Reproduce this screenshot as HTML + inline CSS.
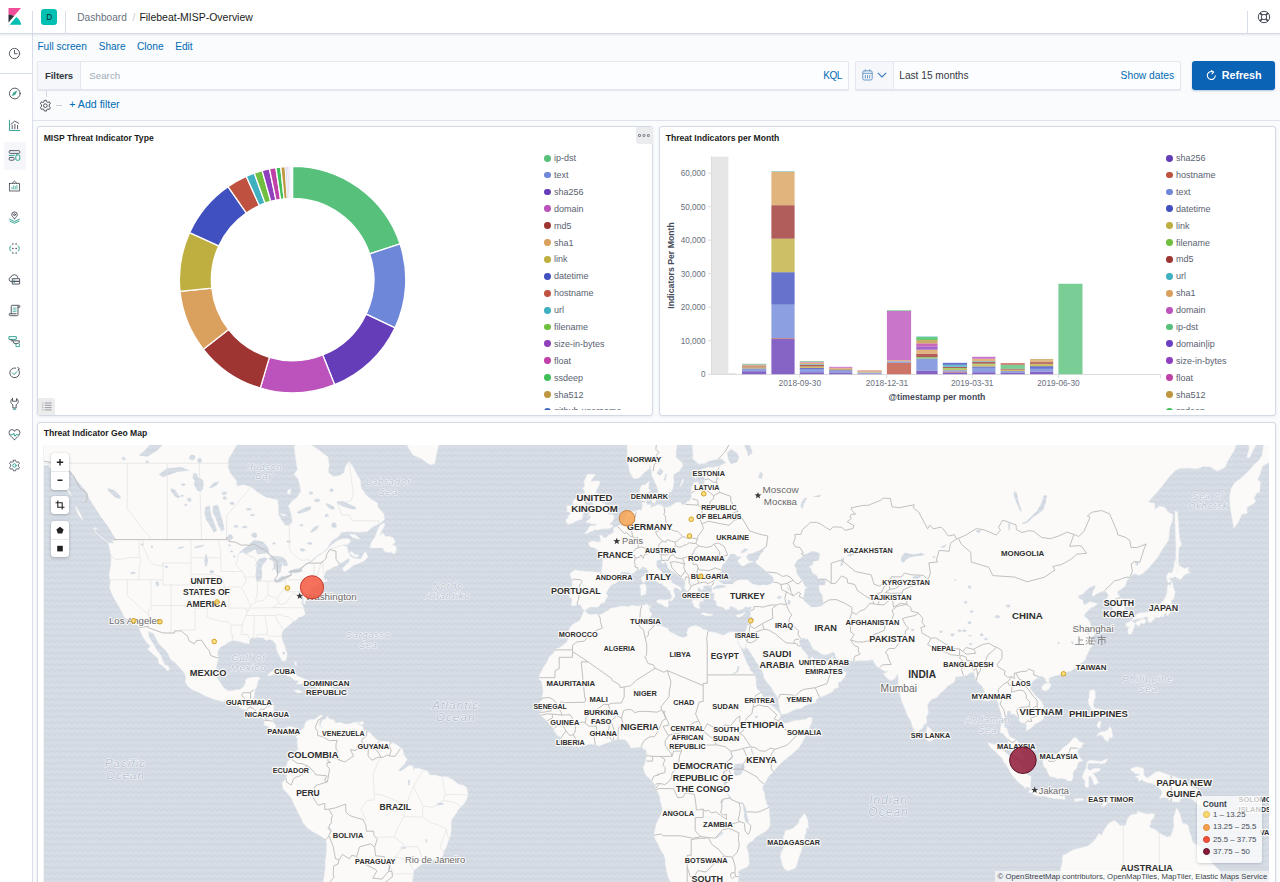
<!DOCTYPE html><html><head><meta charset="utf-8"><title>Filebeat-MISP-Overview</title><style>
*{box-sizing:border-box;margin:0;padding:0}
html,body{width:1280px;height:882px;overflow:hidden;background:#fafbfd;font-family:"Liberation Sans",sans-serif;color:#343741}
.abs{position:absolute}
#hdr{position:absolute;left:0;top:0;width:1280px;height:34px;background:#fff;border-bottom:1px solid #d3dae6;box-shadow:0 1px 2px rgba(152,162,179,.25)}
#nav{position:absolute;left:0;top:0;width:33px;height:882px;background:#fff;border-right:1px solid #d9dfea}
.vsep{position:absolute;width:1px;background:#d9dfea}
.t{position:absolute;white-space:pre;line-height:1}
.lnk{color:#006bb4}
.panel{position:absolute;background:#fff;border:1px solid #d3dae6;border-radius:3px;box-shadow:0 1px 3px rgba(152,162,179,.18)}
.ptitle{position:absolute;left:5.700px;top:6.000px;font-size:8.6px;font-weight:700;color:#1a1c21;white-space:pre;line-height:10px}
.fld{position:absolute;background:#fcfdfe;border:1px solid #e3e8f0;border-radius:2px;box-shadow:0 1px 1px rgba(152,162,179,.25)}
.lg{position:absolute;font-size:9px;color:#5a6270;white-space:pre;line-height:10px}
.lg i{position:absolute;left:-9.800px;top:1.600px;width:6.800px;height:6.800px;border-radius:50%}
</style></head><body><div id="nav"></div><div id="hdr"></div><div class="vsep" style="left:32px;top:11px;height:23px"></div><div class="vsep" style="left:65px;top:11px;height:23px"></div><div class="vsep" style="left:1247px;top:11px;height:23px"></div><svg class="abs" style="left:0;top:0" width="32" height="33" viewBox="0 0 32 33"><path d="M8.500 8.100H21L14.100 16.100C12.500 15.100 10.600 14.500 8.500 14.400Z" fill="#f04e98"/><path d="M8.500 14.400C10.600 14.500 12.500 15.100 14.100 16.100L8.500 22.500Z" fill="#2d2f3a"/><path d="M16.300 17.100C18.900 18.900 20.700 21.600 21.200 24.800H9.600Z" fill="#00bfb3"/></svg><div class="abs" style="left:41px;top:8.500px;width:16.300px;height:16.500px;border-radius:3px;background:#00bfb3"></div><div class="t" style="left:46.300px;top:13.700px;font-size:8.200px;color:#0c2b2a">D</div><div class="t" style="left:77.300px;top:12.700px;font-size:10.150px;color:#69707d">Dashboard</div><div class="t" style="left:132.600px;top:12.700px;font-size:10.200px;color:#c5cbd6">/</div><div class="t" style="left:139.400px;top:12.700px;font-size:10.480px;color:#1a1c21">Filebeat-MISP-Overview</div><svg class="abs" style="left:1257px;top:10px" width="14" height="14" viewBox="0 0 14 14" fill="none" stroke="#404552" stroke-width=".95"><circle cx="7" cy="7" r="5.700"/><circle cx="7" cy="7" r="2.700"/><path d="M2.900 2.900L5.100 5.100M11.100 2.900L8.900 5.100M2.900 11.100L5.100 8.900M11.100 11.100L8.900 8.900" stroke-width="1.500"/></svg><div class="abs" style="left:0;top:73px;width:32px;height:1px;background:#d9dfea"></div><div class="abs" style="left:4px;top:142px;width:22px;height:27.500px;border-radius:3px;background:#f4f6fa"></div><svg class="abs" style="left:8px;top:47.0px" width="13" height="13" viewBox="0 0 16 16" fill="none" stroke="#4a4f5a" stroke-width="1.15" stroke-linecap="round" stroke-linejoin="round"><circle cx="8" cy="8" r="6.3"/><path d="M8 4.2V8.3H11.2"/></svg><svg class="abs" style="left:8px;top:87.3px" width="13" height="13" viewBox="0 0 16 16" fill="none" stroke="#4a4f5a" stroke-width="1.15" stroke-linecap="round" stroke-linejoin="round"><circle cx="8.400" cy="8" r="6.600"/><path d="M10.8 5.2L9 9 5.2 10.8 7 7Z" fill="#2a9d8f" stroke="#2a9d8f" stroke-width=".6"/></svg><svg class="abs" style="left:8px;top:118.5px" width="13" height="13" viewBox="0 0 16 16" fill="none" stroke="#4a4f5a" stroke-width="1.15" stroke-linecap="round" stroke-linejoin="round"><path d="M1.8 1.5V14.2H14.5" stroke="#2a9d8f"/><path d="M5.2 12V8M8.5 12V6.5M11.8 12V8"/><path d="M3.6 6.6L8.2 2.6 13 5.2"/></svg><svg class="abs" style="left:8px;top:149.0px" width="13" height="13" viewBox="0 0 16 16" fill="none" stroke="#4a4f5a" stroke-width="1.15" stroke-linecap="round" stroke-linejoin="round"><rect x="1.5" y="2" width="13" height="3.4" rx="1.2"/><rect x="1.5" y="10.4" width="6" height="3.4" rx="1.2"/><path d="M1.5 7.9H7.5" stroke="#2a9d8f"/><rect x="9.6" y="7.4" width="4.9" height="6.4" rx="1.2" stroke="#2a9d8f"/></svg><svg class="abs" style="left:8px;top:179.5px" width="13" height="13" viewBox="0 0 16 16" fill="none" stroke="#4a4f5a" stroke-width="1.15" stroke-linecap="round" stroke-linejoin="round"><path d="M1.8 4.2H14.2V13.5H1.8Z" stroke-dasharray="1.6 1.1"/><path d="M5.3 4L8 1.4 10.7 4"/><path d="M5 11V9M7 11V7M9 11V8.2M11 11V6.6" stroke="#2a9d8f" stroke-width=".9"/></svg><svg class="abs" style="left:8px;top:210.5px" width="13" height="13" viewBox="0 0 16 16" fill="none" stroke="#4a4f5a" stroke-width="1.15" stroke-linecap="round" stroke-linejoin="round"><path d="M8 9.6C5.6 7.2 4.6 5.9 4.6 4.5A3.4 3.4 0 0 1 11.4 4.500C11.4 5.9 10.400 7.2 8 9.6Z"/><circle cx="8" cy="4.5" r="1.2"/><path d="M2 10.200L8 12.900 14 10.200M2.500 12.600L8 15 13.500 12.600" stroke="#2a9d8f"/></svg><svg class="abs" style="left:8px;top:241.5px" width="13" height="13" viewBox="0 0 16 16" fill="none" stroke="#4a4f5a" stroke-width="1.15" stroke-linecap="round" stroke-linejoin="round"><path d="M3.400 4.700C1.600 6 1.600 10 3.400 11.300M12.600 4.700C14.400 6 14.400 10 12.600 11.300" stroke="#2a9d8f"/><g fill="#4a4f5a" stroke="none"><circle cx="6" cy="2.400" r="1"/><circle cx="10" cy="2.400" r="1"/><circle cx="6" cy="8" r="1"/><circle cx="10" cy="8" r="1"/><circle cx="6" cy="13.600" r="1"/><circle cx="10" cy="13.600" r="1"/></g></svg><svg class="abs" style="left:8px;top:272.5px" width="13" height="13" viewBox="0 0 16 16" fill="none" stroke="#4a4f5a" stroke-width="1.15" stroke-linecap="round" stroke-linejoin="round"><path d="M4.500 10.500H3.800A2.800 2.800 0 0 1 3.600 5 4.500 4.500 0 0 1 12.200 5.600"/><rect x="5.700" y="7" width="8.600" height="3.300" /><rect x="5.700" y="10.300" width="8.600" height="3.300"/><path d="M7.300 8.700H8M7.300 12H8" stroke="#2a9d8f"/></svg><svg class="abs" style="left:8px;top:303.5px" width="13" height="13" viewBox="0 0 16 16" fill="none" stroke="#4a4f5a" stroke-width="1.15" stroke-linecap="round" stroke-linejoin="round"><path d="M4 12V2.600A1 1 0 0 1 5 1.600H13.200A1.300 1.300 0 0 1 14.500 3V4H12.300M12.300 2.600V13A1.400 1.400 0 0 1 10.900 14.400H2.900A1.400 1.400 0 0 1 1.500 13V12H10"/><path d="M6.300 5H10M6.300 7.200H10M6.300 9.400H10" stroke="#2a9d8f" stroke-width=".9"/></svg><svg class="abs" style="left:8px;top:334.5px" width="13" height="13" viewBox="0 0 16 16" fill="none" stroke="#4a4f5a" stroke-width="1.15" stroke-linecap="round" stroke-linejoin="round"><path d="M1.600 2H10.200V5.400H1.600Z" stroke="#2a9d8f"/><path d="M3.800 5.400V7.200H14.200V7.800A3 3 0 0 1 11.200 10.500H8.800A2.500 2.500 0 0 1 6.300 8V7.200"/><path d="M9.800 10.700V14.200H14V10.700" stroke="#2a9d8f" stroke-dasharray="2 1"/></svg><svg class="abs" style="left:8px;top:365.5px" width="13" height="13" viewBox="0 0 16 16" fill="none" stroke="#4a4f5a" stroke-width="1.15" stroke-linecap="round" stroke-linejoin="round"><path d="M13.300 5.200A6 6 0 1 1 9.500 2.500"/><path d="M5.500 8.500L7.500 10.500 11 6.800" stroke="#2a9d8f"/><path d="M12 1.600L14.200 3.800 12.400 4.500"/></svg><svg class="abs" style="left:8px;top:396.5px" width="13" height="13" viewBox="0 0 16 16" fill="none" stroke="#4a4f5a" stroke-width="1.15" stroke-linecap="round" stroke-linejoin="round"><path d="M5.500 1.800V5.200H10.500V1.800A4.600 4.600 0 0 1 12.600 5.700C12.600 7.600 11.300 8.800 10 9.500V13.500H6V9.500C4.700 8.800 3.400 7.600 3.400 5.700A4.600 4.600 0 0 1 5.500 1.800Z"/><path d="M6.400 15H9.600" stroke="#2a9d8f"/></svg><svg class="abs" style="left:8px;top:427.5px" width="13" height="13" viewBox="0 0 16 16" fill="none" stroke="#4a4f5a" stroke-width="1.15" stroke-linecap="round" stroke-linejoin="round"><path d="M8 14.200C3 10.500 1.400 8 1.400 5.600A3.400 3.400 0 0 1 8 4.200 3.400 3.400 0 0 1 14.600 5.600C14.600 8 13 10.500 8 14.200Z"/><path d="M3.200 8.300H5.800L7 6.200 8.600 10.200 10 8.300H12.800" stroke="#2a9d8f"/></svg><svg class="abs" style="left:8px;top:458.5px" width="13" height="13" viewBox="0 0 16 16" fill="none" stroke="#4a4f5a" stroke-width="1.15" stroke-linecap="round" stroke-linejoin="round"><path d="M6.700 1.500H9.300L9.700 3.300 11 4 12.800 3.400 14.100 5.700 12.700 6.900V9.100L14.100 10.300 12.800 12.600 11 12 9.700 12.700 9.300 14.500H6.700L6.300 12.700 5 12 3.200 12.600 1.900 10.300 3.300 9.100V6.900L1.900 5.700 3.200 3.400 5 4 6.300 3.300Z" stroke-width="1.050"/><circle cx="8" cy="8" r="2.100" stroke="#2a9d8f"/></svg><div class="t lnk" style="left:37.4px;top:42.100px;font-size:10.12px">Full screen</div><div class="t lnk" style="left:98.7px;top:42.100px;font-size:10.05px">Share</div><div class="t lnk" style="left:137px;top:42.100px;font-size:10.2px">Clone</div><div class="t lnk" style="left:175.2px;top:42.100px;font-size:10.15px">Edit</div><div class="fld" style="left:37px;top:61px;width:812px;height:28.500px"></div><div class="abs" style="left:37.500px;top:61.500px;width:43px;height:27.500px;background:#f5f7fa;border-right:1px solid #e3e8f0"></div><div class="t" style="left:45px;top:70.900px;font-size:9.600px;font-weight:700;color:#343741;letter-spacing:-.1px">Filters</div><div class="t" style="left:89.200px;top:70.800px;font-size:9.800px;color:#a2abba">Search</div><div class="t lnk" style="left:823.200px;top:70.600px;font-size:10px;letter-spacing:-.4px">KQL</div><div class="fld" style="left:855px;top:61px;width:326px;height:28.500px"></div><div class="abs" style="left:855.500px;top:61.500px;width:38px;height:27.500px;background:#f5f7fa;border-right:1px solid #e3e8f0"></div><svg class="abs" style="left:862px;top:69px" width="11" height="12" viewBox="0 0 11 12" fill="none" stroke="#5a8fc4" stroke-width=".9"><rect x=".8" y="1.800" width="9.400" height="9.200" rx="1.500"/><path d="M.8 4.300H10.200M3.200 .5V2.600M7.800 .5V2.600M3.300 6V9.500M5.500 6V9.500M7.700 6V9.500" /></svg><svg class="abs" style="left:876.500px;top:72px" width="10" height="6" viewBox="0 0 10 6" fill="none" stroke="#3a7bbf" stroke-width="1.100"><path d="M.8 .8L5 5 9.200 .8"/></svg><div class="t" style="left:899.300px;top:70.800px;font-size:10.130px;color:#343741">Last 15 months</div><div class="t lnk" style="left:1120.600px;top:70.800px;font-size:10.250px">Show dates</div><div class="abs" style="left:1192px;top:61px;width:83px;height:28.500px;border-radius:3px;background:#0a63b4;box-shadow:0 1px 2px rgba(10,80,150,.3)"></div><svg class="abs" style="left:1205.500px;top:69.500px" width="11" height="11" viewBox="0 0 11 11" fill="none" stroke="#fff" stroke-width="1.100" stroke-linecap="round"><path d="M9.300 5.800A4 4 0 1 1 7.300 2"/><path d="M5.600 .6L7.600 2.100 6 3.800" stroke-linejoin="round"/></svg><div class="t" style="left:1221.700px;top:69.500px;font-size:10.800px;font-weight:700;color:#fff;letter-spacing:-.05px">Refresh</div><div class="abs" style="left:45.500px;top:89.500px;width:1px;height:7px;background:#d3dae6"></div><svg class="abs" style="left:36px;top:96px" width="20" height="20" viewBox="0 0 20 20" fill="none" stroke="#4a4f5a" stroke-width=".9" stroke-linejoin="round"><g transform="translate(2.800 3.100) scale(.82)"><path d="M6.700 1.500H9.300L9.700 3.300 11 4 12.800 3.400 14.100 5.700 12.700 6.900V9.100L14.100 10.300 12.800 12.600 11 12 9.700 12.700 9.300 14.500H6.700L6.300 12.700 5 12 3.200 12.600 1.900 10.300 3.300 9.100V6.900L1.900 5.700 3.200 3.400 5 4 6.300 3.300Z" stroke-width="1.200"/><circle cx="8" cy="8" r="2.200" stroke-width="1.200"/></g></svg><div class="abs" style="left:55.500px;top:105px;width:6.500px;height:1px;background:#c9d0dc"></div><div class="t lnk" style="left:69.300px;top:99.000px;font-size:10.600px">+ Add filter</div><div class="abs" style="left:33px;top:120px;width:1247px;height:1px;background:#dde3ec"></div><div class="panel" style="left:37px;top:126px;width:616px;height:289.500px"><div class="ptitle">MISP Threat Indicator Type</div></div><svg class="abs" style="left:0;top:0" width="660" height="420" viewBox="0 0 660 420"><path d="M292.60 166.40A113.2 113.2 0 0 1 400.01 243.87L369.65 253.97A81.2 81.2 0 0 0 292.60 198.40Z" fill="#57c17b" stroke="#fff" stroke-width="1.3" stroke-linejoin="round"/><path d="M400.01 243.87A113.2 113.2 0 0 1 395.03 327.80L366.07 314.17A81.2 81.2 0 0 0 369.65 253.97Z" fill="#6f87d8" stroke="#fff" stroke-width="1.3" stroke-linejoin="round"/><path d="M395.03 327.80A113.2 113.2 0 0 1 334.64 384.70L322.76 354.99A81.2 81.2 0 0 0 366.07 314.17Z" fill="#663db8" stroke="#fff" stroke-width="1.3" stroke-linejoin="round"/><path d="M334.64 384.70A113.2 113.2 0 0 1 260.26 388.08L269.40 357.42A81.2 81.2 0 0 0 322.76 354.99Z" fill="#bc52bc" stroke="#fff" stroke-width="1.3" stroke-linejoin="round"/><path d="M260.26 388.08A113.2 113.2 0 0 1 203.40 349.29L228.61 329.59A81.2 81.2 0 0 0 269.40 357.42Z" fill="#9e3533" stroke="#fff" stroke-width="1.3" stroke-linejoin="round"/><path d="M203.40 349.29A113.2 113.2 0 0 1 180.02 291.43L211.84 288.09A81.2 81.2 0 0 0 228.61 329.59Z" fill="#daa05d" stroke="#fff" stroke-width="1.3" stroke-linejoin="round"/><path d="M180.02 291.43A113.2 113.2 0 0 1 189.59 232.66L218.71 245.93A81.2 81.2 0 0 0 211.84 288.09Z" fill="#bfaf40" stroke="#fff" stroke-width="1.3" stroke-linejoin="round"/><path d="M189.59 232.66A113.2 113.2 0 0 1 228.00 186.65L246.26 212.92A81.2 81.2 0 0 0 218.71 245.93Z" fill="#4050bf" stroke="#fff" stroke-width="1.3" stroke-linejoin="round"/><path d="M228.00 186.65A113.2 113.2 0 0 1 246.20 176.35L259.31 205.54A81.2 81.2 0 0 0 246.26 212.92Z" fill="#bf5140" stroke="#fff" stroke-width="1.3" stroke-linejoin="round"/><path d="M246.20 176.35A113.2 113.2 0 0 1 254.25 173.09L265.09 203.20A81.2 81.2 0 0 0 259.31 205.54Z" fill="#40afbf" stroke="#fff" stroke-width="1.3" stroke-linejoin="round"/><path d="M254.25 173.09A113.2 113.2 0 0 1 262.16 170.57L270.76 201.39A81.2 81.2 0 0 0 265.09 203.20Z" fill="#70bf40" stroke="#fff" stroke-width="1.3" stroke-linejoin="round"/><path d="M262.16 170.57A113.2 113.2 0 0 1 269.45 168.79L275.99 200.12A81.2 81.2 0 0 0 270.76 201.39Z" fill="#8f40bf" stroke="#fff" stroke-width="1.3" stroke-linejoin="round"/><path d="M269.45 168.79A113.2 113.2 0 0 1 275.87 167.64L280.60 199.29A81.2 81.2 0 0 0 275.99 200.12Z" fill="#bf40a7" stroke="#fff" stroke-width="1.3" stroke-linejoin="round"/><path d="M275.87 167.64A113.2 113.2 0 0 1 280.77 167.02L284.11 198.84A81.2 81.2 0 0 0 280.60 199.29Z" fill="#40bf58" stroke="#fff" stroke-width="1.3" stroke-linejoin="round"/><path d="M280.77 167.02A113.2 113.2 0 0 1 285.10 166.65L287.22 198.58A81.2 81.2 0 0 0 284.11 198.84Z" fill="#bf9740" stroke="#fff" stroke-width="1.3" stroke-linejoin="round"/><path d="M285.10 166.65A113.2 113.2 0 0 1 286.87 166.54L288.49 198.50A81.2 81.2 0 0 0 287.22 198.58Z" fill="#cfd6ee" stroke="#fff" stroke-width="0.5" stroke-linejoin="round"/><path d="M286.87 166.54A113.2 113.2 0 0 1 288.65 166.47L289.77 198.45A81.2 81.2 0 0 0 288.49 198.50Z" fill="#e3d3e6" stroke="#fff" stroke-width="0.5" stroke-linejoin="round"/><path d="M288.65 166.47A113.2 113.2 0 0 1 290.23 166.42L290.90 198.42A81.2 81.2 0 0 0 289.77 198.45Z" fill="#e9e4f4" stroke="#fff" stroke-width="0.5" stroke-linejoin="round"/><path d="M290.23 166.42A113.2 113.2 0 0 1 291.41 166.41L291.75 198.40A81.2 81.2 0 0 0 290.90 198.42Z" fill="#f1eef6" stroke="#fff" stroke-width="0.5" stroke-linejoin="round"/><path d="M291.41 166.41A113.2 113.2 0 0 1 292.60 166.40L292.60 198.40A81.2 81.2 0 0 0 291.75 198.40Z" fill="#f6f3f4" stroke="#fff" stroke-width="0.5" stroke-linejoin="round"/></svg><div class="abs" style="left:540px;top:145px;width:110px;height:265px;overflow:hidden"><div class="lg" style="left:14px;top:8.20px"><i style="background:#57c17b"></i>ip-dst</div><div class="lg" style="left:14px;top:25.08px"><i style="background:#6f87d8"></i>text</div><div class="lg" style="left:14px;top:41.96px"><i style="background:#663db8"></i>sha256</div><div class="lg" style="left:14px;top:58.84px"><i style="background:#bc52bc"></i>domain</div><div class="lg" style="left:14px;top:75.72px"><i style="background:#9e3533"></i>md5</div><div class="lg" style="left:14px;top:92.60px"><i style="background:#daa05d"></i>sha1</div><div class="lg" style="left:14px;top:109.48px"><i style="background:#bfaf40"></i>link</div><div class="lg" style="left:14px;top:126.36px"><i style="background:#4050bf"></i>datetime</div><div class="lg" style="left:14px;top:143.24px"><i style="background:#bf5140"></i>hostname</div><div class="lg" style="left:14px;top:160.12px"><i style="background:#40afbf"></i>url</div><div class="lg" style="left:14px;top:177.00px"><i style="background:#70bf40"></i>filename</div><div class="lg" style="left:14px;top:193.88px"><i style="background:#8f40bf"></i>size-in-bytes</div><div class="lg" style="left:14px;top:210.76px"><i style="background:#bf40a7"></i>float</div><div class="lg" style="left:14px;top:227.64px"><i style="background:#40bf58"></i>ssdeep</div><div class="lg" style="left:14px;top:244.52px"><i style="background:#bf9740"></i>sha512</div><div class="lg" style="left:14px;top:261.40px"><i style="background:#4068bf"></i>github-username</div></div><div class="abs" style="left:636px;top:127px;width:16.800px;height:16.500px;background:#ebecee;border-radius:0 3px 0 3px"></div><svg class="abs" style="left:638.200px;top:134px" width="13" height="4" viewBox="0 0 13 4" fill="none" stroke="#666b75" stroke-width=".8"><rect x=".5" y=".5" width="2" height="2" rx=".4"/><rect x="4.900" y=".5" width="2" height="2" rx=".4"/><rect x="9.300" y=".5" width="2" height="2" rx=".4"/></svg><div class="abs" style="left:38px;top:398px;width:16.500px;height:16.500px;background:#ececed;border-radius:0 3px 0 3px"></div><svg class="abs" style="left:41.500px;top:402px" width="10" height="9" viewBox="0 0 10 9" stroke="#8e939c" stroke-width=".9" fill="none"><path d="M.3 1H1.400M.3 3.300H1.400M.3 5.600H1.400M.3 7.900H1.400M2.800 1H9.600M2.800 3.300H9.600M2.800 5.600H9.600M2.800 7.900H9.600"/></svg><div class="panel" style="left:659px;top:126px;width:616.500px;height:289.500px"><div class="ptitle">Threat Indicators per Month</div></div><svg class="abs" style="left:655px;top:145px" width="520" height="270" viewBox="655 145 520 270" font-family="Liberation Sans, sans-serif"><rect x="711.600" y="156.600" width="16.800" height="217.600" fill="#e6e6e6"/><rect x="728.400" y="373.200" width="8" height="1.200" fill="#e0e0e0"/><path d="M711.500 156.500V374.500H1160.500" fill="none" stroke="#dcdcdc" stroke-width="1"/><path d="M708 374.2H711.500" stroke="#dcdcdc" stroke-width="1"/><text x="705.600" y="377.2" font-size="8.150" fill="#69707d" text-anchor="end">0</text><path d="M708 340.7H711.500" stroke="#dcdcdc" stroke-width="1"/><text x="705.600" y="343.7" font-size="8.150" fill="#69707d" text-anchor="end">10,000</text><path d="M708 307.2H711.500" stroke="#dcdcdc" stroke-width="1"/><text x="705.600" y="310.2" font-size="8.150" fill="#69707d" text-anchor="end">20,000</text><path d="M708 273.7H711.500" stroke="#dcdcdc" stroke-width="1"/><text x="705.600" y="276.7" font-size="8.150" fill="#69707d" text-anchor="end">30,000</text><path d="M708 240.2H711.500" stroke="#dcdcdc" stroke-width="1"/><text x="705.600" y="243.2" font-size="8.150" fill="#69707d" text-anchor="end">40,000</text><path d="M708 206.7H711.500" stroke="#dcdcdc" stroke-width="1"/><text x="705.600" y="209.7" font-size="8.150" fill="#69707d" text-anchor="end">50,000</text><path d="M708 173.2H711.500" stroke="#dcdcdc" stroke-width="1"/><text x="705.600" y="176.2" font-size="8.150" fill="#69707d" text-anchor="end">60,000</text><path d="M799.8 374.500V378" stroke="#dcdcdc" stroke-width="1"/><text x="799.8" y="386.200" font-size="8.300" fill="#69707d" text-anchor="middle">2018-09-30</text><path d="M886.9 374.500V378" stroke="#dcdcdc" stroke-width="1"/><text x="886.9" y="386.200" font-size="8.300" fill="#69707d" text-anchor="middle">2018-12-31</text><path d="M972.2 374.500V378" stroke="#dcdcdc" stroke-width="1"/><text x="972.2" y="386.200" font-size="8.300" fill="#69707d" text-anchor="middle">2019-03-31</text><path d="M1058.4 374.500V378" stroke="#dcdcdc" stroke-width="1"/><text x="1058.4" y="386.200" font-size="8.300" fill="#69707d" text-anchor="middle">2019-06-30</text><path d="M1160.500 374.500V378" stroke="#dcdcdc" stroke-width="1"/><text x="937" y="400.300" font-size="8.700" font-weight="700" fill="#444a57" text-anchor="middle">@timestamp per month</text><text transform="translate(674.300 265.500) rotate(-90)" font-size="8.700" font-weight="700" fill="#444a57" text-anchor="middle">Indicators Per Month</text><rect x="742.0" y="371.19" width="24.2" height="3.01" fill="#663db8" fill-opacity=".8"/><rect x="742.0" y="369.51" width="24.2" height="1.68" fill="#6f87d8" fill-opacity=".8"/><rect x="742.0" y="368.50" width="24.2" height="1.00" fill="#4050bf" fill-opacity=".8"/><rect x="742.0" y="367.33" width="24.2" height="1.17" fill="#bfaf40" fill-opacity=".8"/><rect x="742.0" y="366.33" width="24.2" height="1.00" fill="#9e3533" fill-opacity=".8"/><rect x="742.0" y="365.15" width="24.2" height="1.17" fill="#daa05d" fill-opacity=".8"/><rect x="742.0" y="364.65" width="24.2" height="0.50" fill="#bc52bc" fill-opacity=".8"/><rect x="742.0" y="363.81" width="24.2" height="0.84" fill="#57c17b" fill-opacity=".8"/><rect x="771.4" y="339.02" width="23.2" height="35.18" fill="#663db8" fill-opacity=".8"/><rect x="771.4" y="338.19" width="23.2" height="0.84" fill="#bf5140" fill-opacity=".8"/><rect x="771.4" y="304.69" width="23.2" height="33.50" fill="#6f87d8" fill-opacity=".8"/><rect x="771.4" y="272.19" width="23.2" height="32.50" fill="#4050bf" fill-opacity=".8"/><rect x="771.4" y="238.69" width="23.2" height="33.50" fill="#bfaf40" fill-opacity=".8"/><rect x="771.4" y="205.19" width="23.2" height="33.50" fill="#9e3533" fill-opacity=".8"/><rect x="771.4" y="171.69" width="23.2" height="33.50" fill="#daa05d" fill-opacity=".8"/><rect x="771.4" y="171.19" width="23.2" height="0.50" fill="#40afbf" fill-opacity=".8"/><rect x="799.8" y="372.19" width="24.1" height="2.01" fill="#663db8" fill-opacity=".8"/><rect x="799.8" y="369.51" width="24.1" height="2.68" fill="#6f87d8" fill-opacity=".8"/><rect x="799.8" y="368.00" width="24.1" height="1.51" fill="#4050bf" fill-opacity=".8"/><rect x="799.8" y="366.50" width="24.1" height="1.51" fill="#bfaf40" fill-opacity=".8"/><rect x="799.8" y="364.82" width="24.1" height="1.68" fill="#9e3533" fill-opacity=".8"/><rect x="799.8" y="364.15" width="24.1" height="0.67" fill="#40afbf" fill-opacity=".8"/><rect x="799.8" y="362.47" width="24.1" height="1.68" fill="#daa05d" fill-opacity=".8"/><rect x="799.8" y="361.81" width="24.1" height="0.67" fill="#bc52bc" fill-opacity=".8"/><rect x="799.8" y="361.13" width="24.1" height="0.67" fill="#57c17b" fill-opacity=".8"/><rect x="829.1" y="372.52" width="23.2" height="1.68" fill="#663db8" fill-opacity=".8"/><rect x="829.1" y="370.85" width="23.2" height="1.68" fill="#6f87d8" fill-opacity=".8"/><rect x="829.1" y="370.18" width="23.2" height="0.67" fill="#4050bf" fill-opacity=".8"/><rect x="829.1" y="369.34" width="23.2" height="0.84" fill="#bfaf40" fill-opacity=".8"/><rect x="829.1" y="368.67" width="23.2" height="0.67" fill="#9e3533" fill-opacity=".8"/><rect x="829.1" y="367.83" width="23.2" height="0.84" fill="#daa05d" fill-opacity=".8"/><rect x="829.1" y="366.83" width="23.2" height="1.00" fill="#bc52bc" fill-opacity=".8"/><rect x="857.5" y="373.70" width="24.2" height="0.50" fill="#663db8" fill-opacity=".8"/><rect x="857.5" y="372.52" width="24.2" height="1.17" fill="#6f87d8" fill-opacity=".8"/><rect x="857.5" y="371.85" width="24.2" height="0.67" fill="#bfaf40" fill-opacity=".8"/><rect x="857.5" y="371.19" width="24.2" height="0.67" fill="#daa05d" fill-opacity=".8"/><rect x="857.5" y="370.51" width="24.2" height="0.67" fill="#bf5140" fill-opacity=".8"/><rect x="886.9" y="362.81" width="24.2" height="11.39" fill="#bf5140" fill-opacity=".8"/><rect x="886.9" y="361.30" width="24.2" height="1.51" fill="#6f87d8" fill-opacity=".8"/><rect x="886.9" y="360.13" width="24.2" height="1.17" fill="#daa05d" fill-opacity=".8"/><rect x="886.9" y="310.88" width="24.2" height="49.25" fill="#bc52bc" fill-opacity=".8"/><rect x="886.9" y="310.21" width="24.2" height="0.67" fill="#57c17b" fill-opacity=".8"/><rect x="916.3" y="370.85" width="21.3" height="3.35" fill="#663db8" fill-opacity=".8"/><rect x="916.3" y="358.45" width="21.3" height="12.39" fill="#6f87d8" fill-opacity=".8"/><rect x="916.3" y="357.12" width="21.3" height="1.34" fill="#70bf40" fill-opacity=".8"/><rect x="916.3" y="353.76" width="21.3" height="3.35" fill="#9e3533" fill-opacity=".8"/><rect x="916.3" y="349.75" width="21.3" height="4.02" fill="#daa05d" fill-opacity=".8"/><rect x="916.3" y="346.39" width="21.3" height="3.35" fill="#8f40bf" fill-opacity=".8"/><rect x="916.3" y="343.38" width="21.3" height="3.01" fill="#bf40a7" fill-opacity=".8"/><rect x="916.3" y="340.03" width="21.3" height="3.35" fill="#bf9740" fill-opacity=".8"/><rect x="916.3" y="337.01" width="21.3" height="3.01" fill="#40bf58" fill-opacity=".8"/><rect x="916.3" y="336.51" width="21.3" height="0.50" fill="#40afbf" fill-opacity=".8"/><rect x="942.8" y="372.52" width="24.2" height="1.68" fill="#663db8" fill-opacity=".8"/><rect x="942.8" y="371.69" width="24.2" height="0.84" fill="#bf5140" fill-opacity=".8"/><rect x="942.8" y="370.18" width="24.2" height="1.51" fill="#6f87d8" fill-opacity=".8"/><rect x="942.8" y="368.84" width="24.2" height="1.34" fill="#bfaf40" fill-opacity=".8"/><rect x="942.8" y="368.00" width="24.2" height="0.84" fill="#70bf40" fill-opacity=".8"/><rect x="942.8" y="366.83" width="24.2" height="1.17" fill="#9e3533" fill-opacity=".8"/><rect x="942.8" y="364.82" width="24.2" height="2.01" fill="#40afbf" fill-opacity=".8"/><rect x="942.8" y="362.81" width="24.2" height="2.01" fill="#4050bf" fill-opacity=".8"/><rect x="972.2" y="372.19" width="23.2" height="2.01" fill="#663db8" fill-opacity=".8"/><rect x="972.2" y="367.83" width="23.2" height="4.36" fill="#6f87d8" fill-opacity=".8"/><rect x="972.2" y="366.50" width="23.2" height="1.34" fill="#4050bf" fill-opacity=".8"/><rect x="972.2" y="364.49" width="23.2" height="2.01" fill="#bfaf40" fill-opacity=".8"/><rect x="972.2" y="363.65" width="23.2" height="0.84" fill="#70bf40" fill-opacity=".8"/><rect x="972.2" y="361.81" width="23.2" height="1.84" fill="#9e3533" fill-opacity=".8"/><rect x="972.2" y="361.13" width="23.2" height="0.67" fill="#40afbf" fill-opacity=".8"/><rect x="972.2" y="358.79" width="23.2" height="2.35" fill="#daa05d" fill-opacity=".8"/><rect x="972.2" y="356.78" width="23.2" height="2.01" fill="#bc52bc" fill-opacity=".8"/><rect x="1000.6" y="372.52" width="24.2" height="1.68" fill="#663db8" fill-opacity=".8"/><rect x="1000.6" y="371.02" width="24.2" height="1.51" fill="#6f87d8" fill-opacity=".8"/><rect x="1000.6" y="369.68" width="24.2" height="1.34" fill="#bfaf40" fill-opacity=".8"/><rect x="1000.6" y="368.84" width="24.2" height="0.84" fill="#9e3533" fill-opacity=".8"/><rect x="1000.6" y="364.82" width="24.2" height="4.02" fill="#57c17b" fill-opacity=".8"/><rect x="1000.6" y="363.14" width="24.2" height="1.68" fill="#bf5140" fill-opacity=".8"/><rect x="1030.0" y="371.52" width="23.2" height="2.68" fill="#663db8" fill-opacity=".8"/><rect x="1030.0" y="368.84" width="23.2" height="2.68" fill="#6f87d8" fill-opacity=".8"/><rect x="1030.0" y="366.16" width="23.2" height="2.68" fill="#4050bf" fill-opacity=".8"/><rect x="1030.0" y="363.81" width="23.2" height="2.34" fill="#bfaf40" fill-opacity=".8"/><rect x="1030.0" y="362.14" width="23.2" height="1.68" fill="#9e3533" fill-opacity=".8"/><rect x="1030.0" y="360.46" width="23.2" height="1.68" fill="#daa05d" fill-opacity=".8"/><rect x="1030.0" y="359.12" width="23.2" height="1.34" fill="#bf9740" fill-opacity=".8"/><rect x="1058.4" y="283.75" width="24.1" height="90.45" fill="#57c17b" fill-opacity=".8"/></svg><div class="abs" style="left:1162px;top:145px;width:110px;height:265px;overflow:hidden"><div class="lg" style="left:14px;top:8.20px"><i style="background:#663db8"></i>sha256</div><div class="lg" style="left:14px;top:25.08px"><i style="background:#bf5140"></i>hostname</div><div class="lg" style="left:14px;top:41.96px"><i style="background:#6f87d8"></i>text</div><div class="lg" style="left:14px;top:58.84px"><i style="background:#4050bf"></i>datetime</div><div class="lg" style="left:14px;top:75.72px"><i style="background:#bfaf40"></i>link</div><div class="lg" style="left:14px;top:92.60px"><i style="background:#70bf40"></i>filename</div><div class="lg" style="left:14px;top:109.48px"><i style="background:#9e3533"></i>md5</div><div class="lg" style="left:14px;top:126.36px"><i style="background:#40afbf"></i>url</div><div class="lg" style="left:14px;top:143.24px"><i style="background:#daa05d"></i>sha1</div><div class="lg" style="left:14px;top:160.12px"><i style="background:#bc52bc"></i>domain</div><div class="lg" style="left:14px;top:177.00px"><i style="background:#57c17b"></i>ip-dst</div><div class="lg" style="left:14px;top:193.88px"><i style="background:#6a3fc4"></i>domain|ip</div><div class="lg" style="left:14px;top:210.76px"><i style="background:#8f40bf"></i>size-in-bytes</div><div class="lg" style="left:14px;top:227.64px"><i style="background:#bf40a7"></i>float</div><div class="lg" style="left:14px;top:244.52px"><i style="background:#bf9740"></i>sha512</div><div class="lg" style="left:14px;top:261.40px"><i style="background:#40bf58"></i>ssdeep</div></div><div class="panel" style="left:37px;top:422px;width:1238.500px;height:470px"><div class="ptitle" style="top:5.300px">Threat Indicator Geo Map</div></div><svg class="abs" style="left:43px;top:445px" width="1226" height="437" viewBox="43 445 1226 437" font-family="Liberation Sans, sans-serif"><defs><pattern id="wv" width="5.600" height="5.800" patternUnits="userSpaceOnUse"><path d="M-.2 3.900Q1.400 1.700 2.800 3.100T5.800 3.900" fill="none" stroke="#cbd2dc" stroke-width="1.150" opacity=".8"/></pattern></defs><rect x="43" y="445" width="1226" height="437" fill="#d7dde5"/><rect x="43" y="445" width="1226" height="437" fill="url(#wv)"/><path d="M35.2 410.2L35.2 462.5L41.2 463.3L46.0 465.7L48.8 464.1L49.2 467.2L55.2 471.2L59.2 475.8L61.2 477.3L63.2 481.1L65.2 486.3L68.0 492.1L72.0 496.4L75.2 502.0L80.0 502.0L85.2 504.7L87.2 510.2L91.2 515.5L95.2 520.8L96.4 525.3L94.0 528.5L96.0 532.8L102.0 537.2L106.0 540.8L108.4 543.0L110.4 552.2L111.2 556.2L110.8 565.4L109.2 575.3L110.4 581.3L109.6 588.2L112.0 593.9L115.2 600.6L117.6 604.1L119.6 607.6L122.0 612.1L124.8 617.7L130.4 619.9L133.6 621.5L138.0 625.1L138.8 627.5L140.8 632.2L143.2 637.4L146.4 642.0L150.4 646.1L147.6 649.3L153.2 654.2L158.0 658.2L158.8 663.5L163.2 666.2L166.0 669.2L167.6 671.0L169.6 669.2L168.0 665.7L164.8 664.8L162.4 659.6L160.8 655.1L156.8 650.2L154.4 645.6L151.2 640.6L148.8 636.4L148.0 631.3L153.2 633.2L156.0 638.3L158.4 642.9L161.2 646.5L164.8 649.3L168.4 654.2L170.4 659.1L175.2 662.7L180.0 667.9L184.4 673.1L186.0 677.9L185.2 681.7L188.0 686.4L192.4 689.8L198.4 692.3L203.2 694.8L207.6 696.9L213.2 699.0L219.2 700.7L223.2 701.5L227.2 699.4L230.4 699.8L234.4 702.3L238.4 706.5L242.0 708.9L247.2 710.2L252.0 711.8L256.4 712.2L257.2 713.1L260.4 716.3L263.6 719.6L264.4 721.2L264.0 724.9L267.6 726.1L271.6 729.0L272.8 731.0L275.6 732.6L279.2 732.2L282.8 734.6L285.2 735.8L287.2 734.6L286.4 731.8L289.2 729.0L293.2 730.6L294.4 733.0L295.6 735.8L297.6 739.0L297.2 743.1L298.0 749.1L294.4 754.7L292.0 757.9L287.6 761.5L286.8 765.1L285.2 769.1L283.6 773.9L287.2 775.1L286.0 778.7L282.0 783.1L283.2 789.1L287.6 793.2L291.2 798.0L293.6 803.3L296.4 809.0L298.8 813.9L302.0 819.6L302.4 821.7L306.4 827.0L312.0 831.2L317.2 834.1L322.0 837.1L326.0 839.6L326.8 844.6L326.4 851.0L326.0 857.5L325.2 861.9L325.2 868.4L324.4 875.1L323.2 881.8L321.6 888.7L321.2 905.1L407.2 905.1L409.2 886.4L412.4 881.8L413.2 875.1L413.6 870.6L419.2 866.2L422.0 864.0L427.2 861.9L431.2 859.7L434.4 859.7L439.2 859.2L443.2 855.3L444.0 851.0L446.4 846.8L448.4 840.4L450.4 836.2L451.2 829.9L451.2 823.7L451.6 819.6L453.2 817.6L456.0 813.5L458.4 809.4L462.0 806.1L464.4 803.3L467.2 798.0L468.0 793.6L466.4 787.1L463.2 785.5L458.4 784.3L453.2 779.9L447.2 776.7L441.2 776.7L435.2 775.1L430.0 775.1L427.2 771.1L421.2 769.1L415.6 767.9L413.2 770.3L413.2 765.9L407.2 765.1L405.2 763.1L407.2 759.1L404.0 755.1L402.4 749.1L398.0 745.5L393.2 743.1L387.2 741.5L379.2 741.1L374.4 737.8L371.2 733.8L367.2 731.0L363.2 730.6L363.2 726.9L359.6 724.9L357.2 722.9L359.6 722.0L353.2 722.5L349.2 724.1L345.2 724.1L341.2 722.5L335.2 722.9L334.0 720.0L329.2 718.8L327.2 715.9L326.0 718.4L322.0 720.8L320.4 724.9L322.4 728.1L319.2 725.7L319.6 720.8L322.0 717.6L322.0 715.1L320.4 715.1L317.2 717.6L314.0 719.6L310.4 719.6L307.6 720.4L305.2 722.9L304.4 726.9L302.0 729.4L299.6 731.0L300.0 733.0L297.6 730.2L295.6 728.1L291.6 726.9L288.8 726.5L285.2 728.5L281.2 729.8L278.4 729.0L276.8 726.5L275.2 724.9L272.8 721.6L272.4 718.4L272.4 714.7L273.2 710.6L274.0 706.5L274.4 704.4L271.2 701.9L267.2 700.7L263.2 700.7L259.2 701.1L255.2 701.5L251.6 700.7L254.0 698.2L254.4 694.0L254.8 690.2L257.2 685.6L257.6 682.1L260.0 678.3L258.4 677.0L253.2 677.0L247.2 678.3L245.6 680.0L245.2 683.9L243.2 687.2L240.0 689.4L236.0 689.8L231.2 691.0L228.4 691.0L225.2 688.9L222.8 686.8L220.8 683.4L218.0 679.2L216.4 674.9L216.0 673.1L216.4 668.3L216.8 664.0L218.4 658.2L217.6 652.9L218.4 649.7L221.2 646.5L225.2 644.7L228.0 642.4L232.0 640.6L237.2 641.1L241.2 642.0L245.2 643.3L249.6 643.8L249.2 639.7L251.2 637.8L255.2 637.8L259.2 637.4L263.2 637.8L266.0 640.6L270.0 639.2L273.2 641.1L276.0 644.3L276.4 649.3L278.4 653.8L280.0 656.9L282.4 660.9L285.2 660.9L286.4 658.2L287.2 653.8L285.2 648.4L284.8 646.1L282.8 641.5L281.6 636.9L282.0 632.7L283.6 629.9L287.2 626.6L290.4 624.2L293.2 621.3L295.6 620.3L299.2 616.9L301.2 616.9L305.2 614.5L304.0 609.6L303.2 606.1L301.6 604.1L302.0 600.6L301.2 596.5L302.4 593.9L303.2 598.0L303.6 602.6L304.4 604.6L306.4 599.5L306.8 596.5L305.2 593.4L307.6 595.4L310.4 592.3L311.2 588.2L315.2 586.6L319.6 584.5L317.2 583.7L321.2 582.9L323.2 582.3L324.8 581.8L327.2 581.3L327.2 579.7L324.8 580.2L323.6 577.5L324.0 575.9L324.8 573.7L326.4 570.4L330.0 569.3L333.6 567.0L338.0 565.4L339.2 563.1L343.2 562.0L347.2 559.1L349.2 558.5L349.6 561.4L346.0 564.8L342.8 568.2L342.8 570.4L345.2 571.5L349.2 568.7L353.2 565.4L359.2 563.1L363.2 561.4L367.2 558.0L368.0 556.8L365.6 551.6L363.2 554.5L361.2 559.1L357.2 559.1L353.2 558.0L350.4 556.2L348.0 551.6L347.2 546.9L344.0 545.7L342.0 545.1L347.2 544.5L350.0 542.7L350.4 540.2L347.2 538.4L341.2 539.0L335.2 542.1L329.2 546.9L325.2 551.6L322.4 552.8L327.2 548.0L329.2 544.5L333.2 539.6L338.0 537.2L341.6 532.2L349.2 531.6L359.2 532.2L367.2 531.6L373.2 526.5L379.2 524.0L383.2 520.8L384.4 519.5L384.0 514.2L380.0 509.5L377.2 506.1L378.0 503.3L371.2 499.2L366.0 494.9L361.2 487.7L360.4 480.3L357.2 475.0L353.2 467.2L349.2 460.9L345.2 467.2L344.0 472.7L339.2 475.8L333.2 476.5L328.0 471.9L329.2 464.9L328.0 456.8L323.2 453.5L319.2 450.2L311.2 445.1L303.2 443.3L296.0 442.5L294.4 446.8L295.2 455.2L296.4 463.3L297.6 469.6L294.0 474.2L298.0 478.8L300.0 486.3L300.8 491.4L297.2 497.1L291.2 502.0L288.4 506.1L290.4 510.8L291.6 516.2L292.4 522.1L289.2 525.3L285.2 525.3L281.2 519.5L278.4 514.2L278.4 507.5L277.6 499.9L271.2 498.5L265.2 497.1L257.2 492.1L251.2 487.0L243.2 484.8L237.2 486.3L236.0 480.3L230.4 473.5L228.0 467.2L228.4 459.2L233.2 451.0L237.2 444.2L243.2 438.1L243.2 410.2ZM625.2 410.2L627.2 446.8L627.2 455.2L628.0 461.7L629.2 468.8L629.6 471.9L633.2 478.1L635.2 478.8L639.2 478.1L643.2 473.5L646.0 471.2L649.2 468.8L649.6 464.1L651.2 470.4L652.0 475.8L654.4 481.1L657.2 487.0L658.4 491.4L658.0 493.5L659.2 497.8L664.0 497.8L664.8 493.5L669.6 492.1L671.2 492.1L672.8 488.5L674.0 481.1L673.2 475.0L675.2 473.5L679.2 471.2L682.8 465.7L682.0 462.5L677.2 458.4L676.0 457.6L676.0 451.0L677.2 444.2L679.2 429.1L692.4 429.1L692.4 445.1L692.8 451.0L693.2 455.2L692.4 458.4L695.2 460.9L699.2 464.1L705.2 463.3L707.2 461.7L713.2 460.1L717.2 459.2L721.2 458.4L726.4 463.3L723.2 464.1L719.2 466.5L713.2 467.2L707.2 467.2L706.0 468.0L701.2 469.6L701.2 473.5L705.2 476.5L704.4 480.3L704.8 484.8L703.2 486.3L700.4 486.3L697.6 481.8L694.0 482.6L691.2 487.7L691.2 493.5L691.6 497.1L689.2 501.3L687.2 501.3L685.2 504.7L682.0 504.7L680.4 502.0L675.2 502.7L671.2 506.1L666.0 507.5L664.0 508.1L661.2 504.7L657.2 504.7L655.2 506.1L651.2 507.5L650.4 507.5L651.2 504.7L647.2 504.7L646.4 502.0L645.6 498.5L647.2 495.6L648.4 492.1L650.8 490.6L648.4 488.5L649.2 482.6L649.6 481.1L645.2 484.8L641.6 485.5L640.0 489.2L639.6 496.4L641.6 501.3L642.8 505.4L642.0 508.1L641.2 510.8L639.2 509.5L635.2 511.5L631.2 511.5L627.2 512.2L626.0 514.8L625.2 518.8L623.2 521.4L621.2 524.0L619.2 525.3L617.2 526.5L613.6 527.8L613.6 532.2L611.2 534.1L608.0 535.3L607.6 536.6L606.0 537.8L602.8 537.2L602.0 535.3L599.6 535.3L600.8 540.8L600.8 541.8L597.2 542.1L593.2 540.8L588.4 542.7L590.0 546.9L594.0 547.5L597.2 549.8L598.8 551.0L600.0 554.5L602.4 556.8L602.8 560.3L602.4 565.4L601.2 571.5L600.0 572.0L595.2 572.0L592.0 571.5L587.2 571.5L583.2 570.9L579.2 570.9L575.2 569.8L570.4 573.1L570.0 574.8L571.6 578.6L572.4 585.0L572.0 589.2L570.0 593.4L569.2 596.5L570.4 597.5L572.0 598.5L572.0 601.1L571.2 605.6L575.2 605.6L577.6 604.6L579.6 604.6L581.6 606.6L582.0 608.1L583.2 609.6L584.8 610.6L586.0 609.6L589.6 607.1L593.2 607.1L598.4 607.1L600.8 603.6L604.4 602.6L606.4 598.0L608.0 596.5L606.0 592.9L609.6 587.1L612.0 584.5L616.0 582.9L620.0 580.2L620.0 577.5L619.2 576.4L619.6 573.7L622.0 572.0L625.6 572.0L628.8 572.6L632.0 573.7L634.0 572.6L636.4 570.4L640.0 569.3L642.8 566.5L646.4 568.2L648.4 571.5L649.2 574.8L651.6 577.5L654.4 579.1L656.4 581.3L659.2 583.4L662.4 583.9L664.0 586.1L666.8 587.1L667.2 589.2L670.0 590.3L670.4 592.9L671.6 595.4L672.0 597.0L670.4 599.5L669.8 600.6L671.6 601.1L673.6 598.5L675.2 596.0L673.6 591.8L673.6 589.2L674.8 587.6L678.8 588.7L680.8 591.3L681.2 588.7L679.2 586.6L675.2 584.5L671.2 582.3L672.0 580.2L668.4 580.2L666.0 578.6L663.2 575.3L661.6 571.5L658.8 569.3L656.8 567.0L656.4 563.1L656.4 560.8L659.2 559.7L662.0 559.1L661.6 562.0L662.8 564.2L664.8 561.4L666.8 563.7L668.0 567.6L670.8 570.4L672.8 571.5L676.4 574.2L679.6 576.4L682.4 578.0L684.0 580.2L685.2 582.3L684.8 585.5L684.4 588.2L686.8 590.8L688.0 593.4L690.0 596.0L691.6 598.5L694.0 599.0L697.2 599.0L698.8 600.6L695.2 599.5L692.8 600.0L692.0 601.6L693.6 604.6L694.0 606.6L696.8 608.1L700.0 608.6L698.4 603.1L700.4 603.6L699.6 601.1L702.0 601.1L703.2 602.3L703.2 599.5L701.2 598.0L698.8 596.0L698.8 593.9L698.0 590.8L697.6 588.2L698.8 587.1L700.8 589.2L702.0 590.5L703.2 588.2L704.8 589.7L702.8 586.6L704.8 585.5L708.0 585.3L711.2 586.1L712.0 588.7L712.0 590.0L711.6 592.9L714.8 592.9L714.0 595.4L714.8 598.5L712.8 599.0L716.0 601.1L716.4 604.1L716.8 605.6L720.0 606.6L723.6 607.6L725.6 609.8L729.2 609.1L730.0 606.3L733.2 607.1L735.2 608.1L738.4 610.6L742.8 609.1L745.6 606.6L748.8 607.6L750.4 606.6L752.0 607.6L750.8 609.6L750.4 612.5L750.8 616.0L750.4 618.4L749.2 620.8L748.0 623.7L747.2 626.1L746.4 629.4L745.2 632.2L744.0 633.2L742.4 634.1L739.2 634.1L736.4 633.2L734.4 632.2L731.2 631.8L728.8 632.2L726.8 633.6L723.2 635.3L719.2 634.1L716.0 632.7L711.2 631.8L708.0 631.8L707.2 630.1L703.2 629.4L700.0 627.0L695.2 625.6L689.6 627.0L687.6 629.4L686.8 633.2L687.6 635.5L684.0 637.8L679.2 636.4L673.6 633.6L669.6 631.8L668.0 628.5L664.4 627.0L660.0 625.6L655.2 625.6L653.2 624.4L651.6 622.7L650.0 621.3L647.2 620.3L649.2 617.9L650.4 616.9L651.6 614.5L651.2 612.5L649.6 611.6L649.2 608.6L651.4 605.3L648.4 606.6L648.0 604.6L646.8 604.1L643.2 605.6L638.4 606.1L635.2 606.1L632.4 605.3L627.6 606.8L623.2 606.1L619.2 606.6L615.2 607.6L611.2 608.1L607.2 611.1L604.8 612.1L602.0 614.0L599.2 615.0L595.6 614.0L591.6 614.5L589.2 614.5L586.0 612.5L586.0 611.1L583.6 611.6L582.4 615.0L580.0 620.3L576.8 622.3L573.2 623.9L570.0 627.5L568.0 632.2L568.0 636.4L568.8 637.4L566.8 642.0L562.8 645.2L559.2 647.9L555.6 648.8L553.6 652.9L549.2 656.9L547.2 661.8L543.6 667.0L542.0 670.5L539.6 674.9L539.0 679.6L541.2 680.9L542.4 685.6L543.2 691.5L542.4 696.1L541.2 700.3L539.2 703.6L537.2 705.6L540.0 708.5L540.4 711.0L540.0 714.7L541.6 716.7L544.8 718.8L547.2 721.6L549.2 723.7L552.4 726.9L554.4 731.0L557.2 735.4L561.2 737.4L564.0 739.8L569.2 743.5L573.2 745.9L576.8 747.5L581.2 746.3L587.2 744.7L591.2 743.9L595.2 744.7L599.2 746.1L603.2 744.3L607.2 742.7L611.2 741.5L612.0 740.7L616.8 739.6L620.8 739.4L625.2 739.8L627.2 741.9L628.8 744.3L631.2 747.9L635.2 747.5L639.2 747.1L641.2 746.3L642.8 747.1L643.2 749.1L646.0 749.9L646.8 753.1L646.4 757.1L645.6 761.1L644.8 763.5L643.2 767.9L644.4 771.5L645.6 774.7L649.2 778.3L652.0 781.1L654.4 783.9L656.0 787.9L656.4 789.5L658.4 793.2L660.0 797.2L660.0 800.4L661.2 804.1L662.4 808.6L662.0 812.6L660.8 815.1L658.4 819.2L656.4 823.7L655.8 826.6L654.4 832.0L654.2 835.2L655.2 839.2L658.4 844.6L660.8 850.2L664.0 855.3L665.2 859.5L665.2 864.0L666.4 869.3L667.6 875.5L670.0 880.9L673.0 884.6L675.2 905.1L737.2 905.1L737.6 884.1L738.8 877.3L738.8 872.9L737.6 872.6L740.4 869.8L747.2 867.1L749.2 864.0L748.8 857.5L748.4 853.2L746.8 847.6L746.6 845.9L749.6 842.5L753.2 840.4L755.2 837.5L759.2 835.0L764.4 832.0L767.2 829.9L770.0 825.8L770.0 821.7L769.6 817.3L769.2 811.4L769.0 807.3L767.2 805.3L766.0 801.2L764.8 797.2L764.4 792.4L762.4 789.1L763.2 785.5L766.0 781.3L768.0 777.1L770.8 774.3L773.6 771.5L777.2 766.7L783.2 761.1L788.4 757.1L793.2 753.1L798.4 748.3L801.6 743.5L804.0 739.0L806.4 733.8L808.8 729.0L810.4 724.9L811.6 722.9L812.0 717.6L809.2 717.6L805.2 719.4L799.2 720.2L795.2 720.4L791.2 721.6L787.2 723.1L783.2 722.9L780.4 719.2L779.8 718.4L778.0 718.8L780.4 716.7L780.4 714.7L778.0 711.4L775.2 708.5L771.2 705.6L768.0 704.4L765.2 701.9L763.2 698.2L761.2 691.9L757.2 689.4L756.0 685.1L756.0 679.2L754.8 674.9L750.0 669.7L749.2 666.6L747.2 664.0L744.4 656.9L742.4 652.0L741.2 648.8L737.6 642.4L737.4 639.4L738.0 641.5L740.0 645.6L741.6 647.5L744.2 649.5L745.2 647.0L746.4 642.9L747.0 641.3L746.4 644.7L745.6 648.1L748.0 648.4L749.2 650.6L753.2 656.9L756.0 661.8L759.2 665.7L761.6 669.7L763.2 673.6L763.8 677.0L766.0 681.3L769.2 684.7L771.6 687.7L773.6 691.9L776.4 695.2L778.4 700.3L778.8 704.4L780.0 710.2L781.2 714.1L784.4 714.1L787.2 713.5L791.2 711.2L797.2 708.7L801.2 708.5L803.6 706.3L809.2 704.0L813.2 703.2L816.0 701.9L816.0 699.4L819.6 697.5L823.6 696.1L828.0 694.0L832.4 692.1L833.6 689.4L836.0 687.9L838.4 687.7L838.0 684.7L838.4 682.1L841.2 681.7L842.4 679.2L844.8 677.0L846.4 672.7L843.2 670.5L841.6 667.9L837.2 666.8L834.0 664.4L832.6 660.9L832.8 655.8L831.4 657.8L828.4 660.4L824.8 664.2L821.2 665.7L817.6 665.3L813.6 664.8L812.4 663.5L813.6 660.4L813.4 657.8L812.2 656.7L810.4 659.1L810.4 662.7L807.8 659.3L808.0 656.0L805.6 652.9L802.4 649.7L801.2 646.5L799.6 643.8L799.0 642.0L799.6 639.7L801.4 639.4L803.2 637.4L805.6 639.0L807.6 638.5L810.4 643.3L812.8 648.8L817.6 651.1L821.2 654.0L825.2 654.9L829.6 653.8L832.4 652.2L834.8 652.9L835.6 656.4L836.8 658.7L842.8 659.8L849.6 660.4L853.6 661.1L856.4 660.9L861.2 660.4L865.6 660.7L869.6 660.2L872.8 659.6L874.0 662.4L876.8 666.2L880.0 667.9L881.6 669.7L885.6 671.4L888.4 670.7L886.0 673.1L883.2 673.1L885.6 676.6L888.8 679.6L891.2 680.4L894.4 678.9L896.0 676.6L897.4 673.8L898.2 676.6L898.4 678.5L898.2 683.4L898.4 687.7L899.2 691.9L900.4 696.1L902.0 701.9L904.4 707.3L906.4 713.1L908.8 718.0L910.4 719.8L912.0 725.1L913.6 729.4L915.2 731.6L917.4 732.7L919.8 729.8L922.8 727.9L923.2 726.1L924.8 723.7L926.6 723.7L926.6 720.8L926.4 717.2L928.4 712.2L927.6 708.5L927.6 704.4L930.0 700.9L932.0 699.0L936.4 697.8L940.4 693.1L944.0 690.2L947.2 686.4L950.6 684.3L954.0 682.1L955.2 680.0L955.2 677.0L959.2 676.4L963.2 676.1L967.2 675.3L969.6 673.1L972.8 671.8L974.4 673.6L975.2 677.4L976.6 680.7L978.8 683.0L982.0 686.0L984.0 689.8L985.4 694.8L984.4 700.3L988.0 701.3L992.0 699.0L994.8 694.8L996.0 697.8L998.0 702.7L999.4 708.1L1001.6 714.7L1001.6 720.8L1001.4 724.9L1000.4 729.0L1000.4 733.0L1002.8 733.0L1005.2 736.2L1007.6 739.2L1008.6 741.5L1009.6 747.1L1010.4 749.9L1012.4 753.1L1014.4 755.1L1016.2 756.3L1019.2 758.3L1021.2 759.9L1024.2 759.5L1024.0 757.1L1022.4 754.3L1021.0 750.9L1020.8 747.9L1019.8 743.7L1016.4 740.3L1014.4 739.0L1011.2 737.4L1009.6 736.2L1007.6 731.4L1006.8 728.1L1004.4 727.7L1004.0 722.9L1005.6 717.6L1007.0 714.3L1007.2 711.4L1009.2 710.6L1011.0 711.4L1010.8 714.1L1014.0 714.1L1016.4 715.9L1018.8 718.4L1019.6 721.2L1021.2 722.5L1024.4 723.1L1026.4 724.9L1026.4 729.0L1026.2 730.6L1028.4 729.6L1032.0 727.3L1034.4 724.5L1035.6 723.5L1039.2 722.0L1042.8 719.6L1044.0 717.0L1045.0 713.1L1044.4 709.6L1043.2 705.2L1042.0 702.7L1040.2 699.8L1037.6 697.8L1035.6 695.7L1033.2 692.7L1031.6 690.6L1030.0 688.5L1030.6 685.1L1032.0 682.6L1034.0 680.0L1036.8 678.3L1039.2 677.0L1041.6 676.1L1043.6 677.0L1045.6 679.2L1046.4 682.1L1049.2 682.1L1048.8 678.3L1051.2 677.0L1055.2 675.7L1059.2 674.9L1061.4 674.0L1064.0 673.6L1066.8 671.8L1070.4 671.2L1074.0 669.0L1078.4 666.2L1079.6 664.0L1082.8 661.8L1085.6 659.6L1086.0 656.4L1088.0 652.9L1090.0 648.4L1093.6 644.3L1094.8 641.1L1092.0 637.8L1090.8 637.4L1094.8 635.0L1092.4 630.8L1094.8 631.3L1091.2 627.0L1090.8 625.1L1089.2 621.3L1087.2 618.4L1084.4 616.5L1084.4 614.5L1087.2 611.3L1088.4 610.3L1091.2 607.6L1095.2 606.1L1097.6 603.6L1095.2 603.1L1092.8 602.6L1090.0 601.6L1086.8 604.1L1084.0 604.8L1082.8 602.6L1083.2 600.6L1079.2 598.5L1078.0 596.0L1080.4 594.9L1083.2 593.9L1085.6 590.8L1090.4 587.1L1094.4 585.5L1095.6 586.8L1093.2 591.3L1092.0 595.4L1093.6 596.2L1096.4 593.9L1101.2 591.8L1104.4 590.8L1106.8 592.3L1108.4 595.4L1107.6 597.5L1106.4 600.0L1109.6 601.6L1113.2 602.6L1113.6 605.6L1112.4 607.1L1113.2 610.6L1112.8 614.5L1112.4 616.9L1113.6 618.6L1117.2 617.4L1121.2 616.0L1123.6 615.0L1125.0 612.5L1125.0 610.1L1124.8 605.6L1123.4 602.1L1120.8 598.0L1118.4 594.4L1117.2 593.9L1117.6 591.3L1121.2 589.2L1124.8 586.6L1126.2 582.9L1127.2 579.7L1129.8 578.0L1132.4 574.8L1134.8 573.7L1138.8 575.3L1143.2 573.1L1148.4 568.2L1152.8 563.1L1157.6 557.4L1161.6 550.4L1165.6 544.5L1168.8 539.6L1169.2 533.5L1170.0 527.2L1172.4 520.8L1172.8 514.2L1168.0 512.2L1165.2 507.5L1159.2 506.1L1155.2 509.5L1154.4 503.3L1148.4 502.0L1151.2 498.5L1157.2 492.1L1162.0 486.3L1168.8 477.3L1175.2 470.4L1180.0 468.4L1189.2 468.0L1197.2 468.8L1203.2 466.5L1210.4 466.9L1217.2 471.2L1225.2 467.2L1227.2 461.7L1234.0 451.0L1237.2 442.5L1248.4 442.5L1249.2 448.5L1246.8 457.6L1249.6 457.6L1253.2 450.2L1257.2 442.5L1264.0 442.5L1262.0 455.2L1259.2 460.1L1254.8 464.1L1248.4 471.2L1240.4 478.8L1234.8 482.6L1231.2 488.5L1229.6 496.4L1230.0 506.1L1231.6 515.5L1233.9 528.0L1237.6 523.3L1240.8 516.8L1241.8 514.2L1247.2 513.5L1246.8 507.5L1254.0 503.3L1255.6 501.3L1254.0 497.8L1257.6 492.1L1259.6 492.8L1260.4 481.8L1257.6 479.6L1260.0 474.2L1262.4 466.5L1267.2 463.3L1275.2 460.1L1275.2 410.2ZM403.2 410.2L406.0 442.5L408.8 448.5L413.2 455.2L421.2 458.4L426.4 462.5L431.2 464.9L434.8 463.3L436.0 456.8L437.2 451.0L439.2 442.5L443.2 410.2ZM370.0 548.0L371.2 542.7L375.2 536.6L378.0 529.1L380.0 525.3L383.6 523.3L385.2 524.6L382.8 529.1L380.4 533.5L380.0 535.3L383.2 532.8L385.2 536.6L389.2 536.3L393.2 537.8L395.2 542.1L392.4 545.1L395.2 545.7L396.6 548.3L395.2 553.6L392.8 553.6L391.2 551.6L390.4 552.5L386.4 552.2L383.6 550.4L383.2 548.0L377.2 548.0L373.2 548.0ZM349.2 534.1L355.2 534.7L360.4 539.0L357.2 538.7L352.0 537.2ZM349.6 553.3L351.2 551.3L355.2 554.8L359.2 554.8L357.2 557.4L353.2 556.2ZM267.4 675.5L271.2 671.8L274.4 670.5L277.6 669.9L281.2 670.1L284.8 670.5L287.2 671.0L290.0 673.1L294.0 673.6L297.2 675.7L298.8 676.6L303.2 678.5L304.8 679.2L308.0 680.7L310.6 682.4L307.2 683.9L304.0 683.6L299.2 683.9L296.4 684.1L298.4 681.7L298.8 680.4L295.2 680.4L293.2 679.2L291.2 676.8L287.2 675.9L285.2 674.6L282.4 674.0L279.2 673.1L278.0 671.8L275.2 673.6L271.6 674.9L269.2 675.9ZM309.4 690.4L310.4 689.1L315.2 690.0L317.8 689.6L316.0 687.2L313.6 684.9L316.4 683.6L320.4 684.1L324.4 684.3L327.6 684.9L330.4 686.4L328.8 687.2L332.4 687.9L333.8 689.4L332.4 691.0L327.6 690.0L325.2 691.0L322.8 690.8L321.6 693.6L320.0 691.7L317.2 691.0L312.0 691.7ZM293.8 690.4L297.2 689.8L302.0 691.3L302.4 692.3L298.4 692.9L294.0 691.0ZM338.2 690.2L344.6 690.2L344.6 691.9L338.4 692.1ZM359.6 722.0L363.4 721.6L363.2 724.3L359.6 724.7ZM75.2 506.1L80.4 507.5L82.0 517.5L82.8 520.8L78.0 514.2ZM93.6 528.5L99.2 529.7L106.0 532.8L111.2 538.4L113.6 543.3L108.4 542.7L105.2 540.2L101.2 537.2L96.0 532.8ZM294.4 661.3L296.4 662.2L296.4 666.2L295.2 664.8ZM288.0 489.9L291.2 489.2L290.0 494.2L287.2 493.5ZM280.0 513.5L286.4 514.8L283.6 516.2ZM584.4 533.2L587.2 533.5L590.8 531.3L593.2 531.6L593.6 529.7L597.4 530.0L599.4 529.7L602.0 528.8L604.0 528.8L608.2 528.8L611.0 527.8L612.8 526.2L613.0 524.9L610.8 524.9L609.6 524.3L611.0 522.4L612.4 521.4L613.6 519.5L614.2 517.5L613.6 515.2L612.4 514.5L609.2 514.5L608.0 515.5L608.6 513.5L607.8 510.8L606.8 510.2L607.6 509.8L606.6 507.5L606.8 506.8L605.6 505.4L604.8 504.0L602.4 503.0L601.6 500.6L600.8 497.1L599.2 494.9L597.2 493.5L594.4 493.5L596.8 491.4L596.0 490.3L597.4 488.5L598.8 485.2L600.0 482.6L599.2 481.1L594.0 481.1L591.2 481.8L591.2 479.9L594.8 475.4L595.0 474.2L593.6 474.2L587.2 474.2L586.0 477.3L584.0 481.8L584.4 484.1L584.8 486.3L582.4 488.5L584.8 490.6L584.4 498.5L586.0 494.9L587.6 494.2L588.4 497.1L586.8 500.9L587.6 503.0L589.6 502.0L592.8 501.3L592.8 504.0L594.4 506.8L595.8 506.4L595.0 509.2L595.2 511.5L593.6 511.9L590.4 512.2L589.6 513.5L588.0 515.5L590.8 515.2L590.8 517.5L588.4 520.1L586.0 521.4L587.2 523.0L590.0 522.7L590.4 523.7L592.4 523.7L594.4 524.3L596.4 523.3L595.2 525.9L592.0 525.6L590.4 525.9L589.2 527.2L587.2 530.7ZM581.8 519.7L583.2 514.2L582.8 512.2L582.4 507.5L585.0 505.4L585.4 504.4L584.4 502.3L583.2 499.2L579.2 498.8L577.6 498.1L574.0 499.5L572.4 503.0L574.4 504.0L572.8 505.4L567.2 505.8L566.8 507.8L567.6 510.2L566.4 511.5L571.2 512.9L569.2 514.8L567.6 517.2L569.2 517.2L565.6 520.1L566.4 522.1L566.8 523.3L568.0 524.3L573.2 523.0L574.0 522.1L576.8 520.8L579.2 519.8ZM656.9 601.6L657.0 600.3L660.6 599.5L665.2 600.3L669.4 599.0L668.0 603.1L668.4 605.3L667.6 607.3L664.8 606.6L661.2 604.1L657.6 602.8ZM639.8 587.1L640.0 585.0L644.0 583.7L646.0 585.5L646.4 588.2L646.0 590.8L645.6 594.4L643.6 594.4L641.8 596.1L640.8 594.4L640.8 590.8L640.8 588.7ZM644.8 574.2L645.4 579.1L644.8 581.8L644.0 583.0L642.4 581.8L641.6 579.7L641.6 577.5L642.2 576.6L644.4 575.9ZM701.2 613.0L704.0 612.8L707.6 613.8L710.0 614.0L712.4 614.0L712.4 615.2L709.2 615.7L706.0 616.0L703.2 614.5L701.2 614.3ZM736.4 616.0L736.4 615.0L738.8 614.5L741.6 613.8L745.6 612.1L743.2 615.0L741.6 616.2L739.2 617.4L736.8 616.7ZM651.6 495.6L654.0 493.9L657.4 493.2L657.6 496.4L656.0 498.5L655.6 500.9L655.0 503.3L652.0 502.3L652.0 499.2ZM646.4 497.1L648.4 496.4L650.4 498.5L650.0 500.2L647.6 500.2L646.4 498.5ZM680.0 486.3L682.4 479.6L684.0 479.6L682.4 483.3L680.8 486.3ZM694.8 476.5L698.8 473.9L700.0 475.4L697.2 477.3L695.2 478.8ZM926.6 725.7L930.8 729.0L932.0 730.8L934.0 734.2L934.6 737.0L933.6 739.4L931.2 740.7L929.2 741.3L927.6 740.7L926.6 737.4L926.4 734.6L926.4 732.2L926.8 729.4L927.2 726.5ZM804.4 813.5L806.8 817.6L808.0 821.7L808.0 825.8L809.2 827.9L806.0 828.3L806.4 832.0L804.8 835.4L804.8 838.9L803.2 844.6L801.2 851.0L799.2 856.6L797.6 861.9L795.6 868.0L791.2 869.8L788.0 871.1L784.0 868.4L782.0 863.6L780.4 856.2L781.2 852.3L783.2 848.9L784.8 844.6L784.0 841.7L783.2 837.5L784.8 832.9L785.0 830.8L788.4 829.9L792.4 828.7L796.0 825.8L798.8 822.9L799.2 820.0L802.4 815.9ZM1175.0 511.0L1177.5 512.0L1178.5 525.0L1179.5 538.0L1181.5 545.0L1178.8 548.0L1178.2 560.0L1179.5 571.0L1176.5 572.5L1175.8 560.0L1176.0 548.0L1175.5 535.0L1175.0 522.0ZM1168.0 582.9L1167.2 579.7L1166.4 576.4L1168.8 572.6L1172.0 573.1L1174.0 567.0L1174.4 562.0L1175.0 560.3L1178.8 565.4L1184.4 568.7L1188.4 567.0L1188.0 570.9L1190.4 572.3L1184.8 574.5L1180.4 579.7L1175.2 576.7L1171.2 578.0L1168.8 578.0L1170.8 580.7L1172.0 580.7ZM1171.2 582.3L1172.8 582.9L1173.2 587.6L1175.2 592.3L1173.6 599.0L1171.2 600.6L1171.2 605.6L1169.6 609.1L1170.6 612.1L1168.8 614.5L1166.8 616.0L1166.4 612.5L1164.0 614.5L1162.6 617.4L1161.2 615.5L1160.0 617.4L1155.2 617.4L1154.8 615.5L1154.4 618.9L1152.4 620.8L1150.4 623.0L1147.6 620.8L1147.6 618.9L1148.8 617.4L1145.2 616.9L1141.2 618.4L1136.8 618.9L1131.2 620.6L1132.8 618.4L1137.6 613.5L1140.4 612.8L1144.0 612.8L1148.4 612.1L1151.2 612.3L1151.6 609.6L1154.0 606.1L1154.2 604.1L1156.4 603.1L1155.2 605.1L1155.6 606.6L1160.0 604.6L1162.4 601.6L1163.6 600.6L1165.2 597.5L1166.8 593.9L1167.2 591.3L1167.2 587.1L1168.4 584.5L1170.8 585.5ZM1137.2 621.3L1139.2 620.3L1143.2 618.6L1145.6 619.4L1146.0 621.3L1144.0 623.9L1141.2 622.7L1139.2 626.3L1136.8 625.1L1135.2 623.5ZM1130.8 620.8L1134.0 622.3L1134.8 625.1L1134.0 627.0L1133.0 630.3L1131.6 633.2L1130.0 634.6L1128.0 633.4L1128.0 629.4L1129.2 627.0L1126.4 626.6L1125.6 624.2L1126.8 622.7L1128.8 622.3ZM1042.0 686.8L1044.4 683.9L1047.2 683.0L1049.6 683.0L1051.2 685.1L1049.2 688.5L1047.2 690.2L1045.2 691.0L1042.0 689.8ZM1090.0 690.2L1092.4 689.8L1095.2 690.6L1095.2 694.8L1095.6 696.9L1094.0 700.3L1093.2 704.4L1093.6 707.3L1096.4 708.5L1099.2 708.9L1102.0 710.2L1102.8 712.6L1101.2 711.8L1097.6 710.2L1094.0 709.4L1091.2 709.4L1090.4 706.5L1088.8 704.4L1088.0 700.3L1089.2 697.8L1089.2 694.0ZM1098.8 721.2L1101.2 721.6L1100.4 725.3L1099.6 728.5L1097.2 726.5L1096.8 724.9ZM1096.4 736.2L1098.4 733.4L1101.6 731.4L1104.4 731.8L1106.4 730.6L1108.8 729.0L1109.6 726.5L1111.6 729.0L1112.0 732.2L1112.8 735.8L1111.6 738.6L1109.6 737.0L1108.8 739.8L1108.0 741.5L1104.8 739.8L1103.6 737.0L1101.2 735.0L1099.2 735.0ZM1043.2 759.1L1045.8 756.8L1048.4 758.3L1051.2 759.1L1052.8 755.5L1059.2 752.3L1063.2 747.5L1067.2 745.1L1071.2 741.1L1074.0 737.4L1076.0 737.4L1078.0 739.8L1079.6 741.7L1084.0 743.5L1081.6 745.5L1081.6 747.5L1078.8 748.3L1077.6 751.1L1078.8 756.3L1082.8 760.7L1078.8 761.9L1077.2 765.1L1076.8 767.9L1074.4 770.3L1072.8 773.1L1073.2 777.1L1071.6 781.1L1067.2 780.7L1065.6 779.1L1061.2 778.3L1057.2 778.7L1054.0 777.1L1050.4 776.7L1048.0 773.1L1046.4 769.1L1043.6 766.3L1042.8 761.9ZM988.4 742.7L993.2 744.3L997.2 744.1L1000.4 748.3L1002.0 750.1L1006.4 753.1L1008.8 755.5L1011.2 756.3L1013.2 758.3L1017.2 761.1L1019.2 762.7L1022.0 765.1L1021.2 766.3L1021.6 769.1L1024.8 769.3L1025.6 772.3L1026.8 774.3L1031.2 776.7L1030.6 781.1L1030.6 785.1L1030.4 788.5L1028.4 787.1L1025.6 787.1L1025.4 788.7L1023.2 785.9L1020.8 784.3L1016.4 780.3L1012.8 775.9L1010.8 773.1L1008.6 768.9L1006.4 765.1L1003.6 761.9L1002.4 758.3L998.4 755.1L996.0 752.3L991.6 748.5L988.4 744.3ZM1028.0 792.4L1031.2 788.7L1034.4 789.5L1038.8 790.4L1041.6 792.2L1045.2 792.6L1048.8 793.0L1050.8 790.8L1053.2 791.8L1057.6 792.8L1058.2 794.0L1060.0 796.2L1063.2 796.0L1065.0 796.4L1064.8 799.8L1061.2 798.8L1057.6 798.8L1053.2 798.4L1049.2 797.6L1045.2 796.2L1043.2 796.0L1040.8 796.4L1037.6 796.0L1033.2 794.8L1032.8 793.2L1029.6 792.6ZM1074.2 798.8L1077.2 798.8L1080.4 798.4L1083.6 798.8L1083.2 800.2L1079.2 800.8L1075.2 801.7ZM1086.6 798.8L1091.2 798.6L1096.4 798.8L1099.2 798.2L1098.4 799.8L1093.2 800.8L1087.2 800.4ZM1101.2 806.7L1103.2 802.9L1107.2 799.8L1111.2 799.0L1116.4 798.8L1113.6 801.2L1108.0 803.3L1104.8 805.9ZM1084.8 785.7L1085.2 781.1L1083.2 779.1L1082.4 776.3L1084.4 771.1L1086.4 767.9L1086.4 764.3L1087.2 761.9L1090.4 759.9L1093.2 760.7L1097.2 761.1L1101.2 761.5L1105.2 759.5L1108.0 758.7L1105.2 763.1L1100.4 763.9L1099.2 763.1L1095.2 763.3L1091.2 763.3L1088.4 763.1L1087.6 765.1L1087.6 768.7L1090.0 770.7L1093.2 768.7L1097.2 768.3L1100.8 768.9L1098.4 771.5L1094.0 772.7L1092.8 773.1L1095.2 776.3L1096.8 778.7L1097.6 781.1L1098.8 782.7L1095.2 784.7L1093.6 784.3L1093.2 781.1L1091.2 777.1L1091.2 775.9L1088.4 776.7L1088.8 780.3L1088.8 784.3L1088.8 787.1L1086.4 787.5ZM1131.2 768.3L1137.2 766.7L1143.2 768.3L1144.0 771.1L1143.6 775.1L1145.2 776.3L1147.2 778.3L1153.2 773.9L1155.2 772.3L1159.2 771.5L1163.2 773.1L1170.0 775.3L1173.2 775.9L1179.2 778.7L1185.2 780.5L1190.4 785.9L1194.0 788.3L1197.2 788.7L1198.6 791.8L1195.2 792.2L1196.0 795.2L1200.0 799.6L1204.4 801.7L1207.2 805.7L1210.4 806.5L1207.2 807.9L1203.2 806.5L1196.0 803.3L1191.2 798.0L1186.4 795.6L1185.2 795.6L1181.2 798.4L1179.2 802.1L1177.2 802.1L1171.2 801.7L1167.2 798.0L1163.2 797.6L1159.2 798.6L1162.0 794.0L1161.6 791.6L1159.2 787.5L1155.2 784.7L1151.2 783.3L1147.2 782.7L1143.2 780.7L1142.0 779.5L1138.8 781.5L1138.4 778.7L1135.2 776.3L1140.4 775.1L1139.2 773.9L1135.2 773.5L1132.4 771.1L1130.8 770.3ZM1063.2 905.1L1065.6 885.5L1063.2 877.3L1060.4 872.9L1060.8 868.4L1062.0 864.0L1062.4 859.7L1062.8 855.3L1065.6 854.5L1067.2 853.2L1071.2 851.0L1074.0 849.5L1079.2 848.3L1087.2 846.3L1092.4 842.5L1096.0 838.3L1098.8 833.3L1101.6 835.4L1103.2 831.6L1105.6 827.9L1108.4 823.7L1111.2 821.7L1114.8 820.6L1118.4 823.7L1120.0 825.8L1123.2 825.4L1125.6 825.4L1127.2 819.6L1128.4 817.6L1130.4 815.3L1133.2 814.3L1137.2 813.9L1137.6 811.0L1141.2 812.6L1147.2 814.3L1151.2 813.5L1154.8 814.3L1153.2 818.4L1150.8 820.8L1150.8 824.6L1149.2 825.8L1151.2 828.3L1155.2 829.5L1159.2 832.9L1164.4 835.8L1167.2 837.1L1170.8 836.2L1172.8 829.9L1174.0 825.8L1173.6 821.7L1173.6 817.6L1174.8 813.5L1176.0 809.4L1177.2 808.2L1178.8 811.4L1180.4 815.5L1181.6 820.0L1182.4 823.3L1186.0 824.1L1188.4 825.8L1189.2 831.2L1190.4 833.7L1191.6 837.5L1192.4 841.7L1194.4 843.6L1198.0 845.5L1201.2 847.2L1202.8 849.3L1204.0 851.7L1205.6 856.2L1210.0 857.9L1210.4 861.0L1212.4 863.6L1215.2 866.2L1217.2 868.0L1219.2 869.8L1220.0 872.9L1219.6 877.3L1220.0 879.6L1221.2 882.7L1221.6 886.4L1221.2 905.1Z" fill="#fbfaf8" stroke="#eef0f2" stroke-width=".6" stroke-linejoin="round"/><path d="M238.8 553.1L243.2 552.2L245.6 553.9L251.2 551.6L255.6 548.9L257.6 554.2L263.2 553.6L267.2 553.1L269.2 554.5L268.8 550.4L267.2 546.3L262.4 541.5L254.4 540.2L250.4 543.3L247.2 546.3L242.4 549.8ZM256.8 581.3L259.6 581.3L262.0 577.5L262.0 571.5L261.2 568.2L262.8 564.2L265.2 562.0L267.2 558.8L264.8 557.4L261.2 558.3L259.2 559.1L256.8 562.5L255.2 565.6L257.6 564.8L256.0 568.7L256.4 572.0L255.6 574.2L256.0 578.0ZM268.4 558.5L273.2 561.1L274.0 567.0L271.6 570.4L275.2 568.4L277.4 574.2L280.4 572.0L281.6 565.9L282.0 561.7L283.4 565.4L286.8 565.9L287.6 564.2L286.4 560.8L283.6 557.7L280.4 556.8L277.2 556.2L273.2 556.0L270.8 555.7L270.4 557.4ZM273.4 581.3L276.4 582.6L280.4 582.3L286.8 578.8L291.6 575.0L288.0 575.0L285.2 576.4L282.0 576.1L277.2 579.7L274.8 579.4ZM288.0 572.6L289.6 570.7L295.2 569.0L301.2 567.6L302.4 571.2L296.8 572.9L291.2 572.9ZM139.2 455.2L145.2 450.2L151.2 443.3L163.2 439.0L169.2 439.9L161.2 445.9L157.2 450.2L152.4 453.5L147.2 456.4ZM263.6 717.2L267.2 717.2L268.0 720.0L264.8 719.6ZM327.2 827.5L330.0 828.3L332.0 831.2L329.6 830.4ZM301.2 567.6L306.0 563.7L310.4 561.4L313.2 559.1L317.2 555.7L322.4 552.8L322.4 553.1L317.2 556.5L313.2 560.3L310.4 562.5L306.0 564.8L301.6 568.2ZM437.6 802.9L442.4 802.9L444.0 804.1L440.0 804.9L437.2 805.3ZM408.0 780.3L409.6 780.3L410.0 785.1L408.4 785.1ZM425.6 839.6L427.2 839.6L426.8 842.5L425.6 842.1ZM400.8 847.2L406.0 846.8L405.6 848.5L401.2 848.9ZM388.8 865.4L390.4 865.4L389.6 870.2L388.4 870.2ZM282.8 652.0L284.8 652.0L284.8 654.2L282.8 654.2ZM155.6 581.8L158.4 581.8L158.8 586.1L156.4 586.1ZM723.6 583.9L719.6 581.8L719.2 579.7L718.0 577.0L718.8 573.1L721.6 571.5L721.6 567.6L723.2 564.2L726.0 562.0L728.0 558.5L730.0 554.5L733.2 553.9L735.2 554.5L737.2 556.8L741.6 556.8L737.2 560.8L740.8 565.6L743.2 566.5L748.8 563.1L753.2 562.0L753.6 560.8L749.2 560.8L747.2 558.5L746.4 556.2L748.4 554.5L753.2 553.3L757.6 551.0L761.2 550.4L764.4 550.4L761.2 553.3L759.2 556.2L758.0 559.1L755.2 561.4L756.4 563.7L759.2 565.9L763.2 568.7L766.0 571.5L768.4 573.7L771.2 575.3L773.2 578.0L773.6 581.8L771.2 583.4L767.2 585.0L763.2 584.5L759.2 585.3L755.2 584.5L752.4 583.4L749.2 581.3L747.2 579.4L743.2 579.7L739.2 579.7L735.2 581.3L732.4 583.9L728.4 583.9ZM713.6 587.9L717.2 585.2L720.0 585.0L723.2 585.3L726.8 586.3L723.2 587.6L719.2 588.2L716.4 588.2L712.8 589.5ZM797.2 574.2L796.4 568.7L794.4 565.4L797.2 560.3L801.2 558.0L803.2 555.1L807.2 553.9L811.2 551.6L814.8 551.6L819.2 553.3L819.6 556.2L818.4 560.3L813.2 561.4L812.0 565.4L808.4 565.9L810.8 568.7L812.4 573.1L817.2 575.9L818.0 580.2L821.6 579.1L825.6 580.7L824.8 585.0L819.2 585.0L818.8 587.1L819.2 590.3L820.8 593.4L822.4 596.0L822.8 601.1L822.8 605.6L815.2 607.1L811.2 606.8L807.2 603.6L802.8 599.0L804.4 593.9L805.2 588.7L808.8 588.2L805.2 586.6L803.2 582.3L801.6 579.7ZM840.4 565.4L842.0 558.5L844.4 557.4L843.2 562.0L842.0 565.9ZM847.2 555.7L851.2 552.8L854.0 554.5L850.4 556.2ZM901.2 560.8L901.6 556.2L905.2 552.8L909.2 553.9L913.2 554.5L917.2 553.9L921.2 553.3L924.4 554.5L921.2 555.7L915.2 556.2L909.2 557.4L905.2 560.3L903.6 563.1ZM912.0 577.5L917.2 575.6L920.8 576.4L918.4 578.6L914.4 578.8ZM932.0 557.4L935.2 555.7L934.8 558.0ZM940.0 546.9L946.4 544.5L944.4 547.5ZM1022.0 524.0L1027.2 522.7L1031.2 518.8L1037.2 514.2L1042.8 510.2L1045.6 502.7L1046.8 495.6L1044.0 495.6L1041.2 504.0L1037.2 510.8L1031.2 516.8L1026.4 521.4L1022.8 522.4ZM1014.4 491.4L1016.8 492.8L1018.0 500.6L1020.4 507.5L1021.6 511.5L1020.0 510.8L1018.0 506.1L1015.2 499.2L1013.6 493.5ZM1008.4 523.3L1010.0 524.0L1009.6 530.3L1008.4 529.7ZM976.4 530.3L980.4 530.3L980.0 532.5L976.8 532.2ZM1005.6 605.6L1008.4 604.6L1010.4 606.6L1008.0 607.6ZM1135.2 562.0L1138.4 562.0L1138.0 565.4L1135.6 564.8ZM731.2 464.1L737.2 461.7L738.8 457.6L737.2 453.5L731.2 449.3L727.2 452.7L728.4 459.2ZM748.0 456.0L752.4 452.7L750.4 446.8L745.2 439.9L744.8 446.8L747.2 451.0ZM656.8 473.5L660.0 468.4L663.2 471.2L660.4 475.4ZM664.0 480.3L665.6 474.2L666.8 474.2L665.2 480.3ZM715.2 471.9L718.4 471.2L717.6 477.3L719.6 479.6L716.8 477.7ZM758.4 477.3L760.4 471.9L762.8 474.2L761.6 478.8ZM800.4 505.4L804.0 498.5L807.2 497.8L804.0 503.3L802.4 508.8ZM813.2 496.4L821.2 494.9L819.2 497.1ZM740.4 552.2L745.2 548.6L748.0 549.8L743.2 552.8ZM787.6 604.1L788.4 599.5L790.4 601.1L790.0 604.6ZM776.8 597.5L780.0 595.4L781.6 598.0L778.4 599.0ZM787.2 587.1L788.8 588.2L789.6 589.7L788.0 589.2ZM740.0 596.0L741.6 595.4L741.6 598.0L740.4 598.0ZM734.4 764.3L737.2 763.9L741.2 763.7L743.6 765.1L745.2 766.7L743.6 769.1L742.4 772.3L740.8 774.3L738.8 775.1L735.2 775.5L734.0 773.1L734.2 769.1ZM724.8 778.7L725.6 783.1L726.4 787.1L725.2 791.2L729.2 795.2L732.0 800.4L729.2 798.0L728.0 794.4L724.4 789.1L724.0 785.1L723.6 781.1ZM743.2 803.3L745.6 807.3L746.8 811.4L746.8 815.5L748.4 819.6L748.0 823.3L746.0 822.5L744.4 817.6L744.0 811.4L742.8 805.3ZM751.6 747.1L752.4 751.1L754.0 755.1L752.8 754.7L750.8 749.9ZM732.4 755.9L728.8 760.3L730.8 759.9L733.2 756.7ZM724.8 765.5L726.4 765.9L726.0 767.9L724.8 767.5ZM723.2 771.5L724.4 771.9L724.0 774.7L722.8 774.3ZM721.2 799.6L723.6 800.0L722.8 802.9L721.2 802.5ZM715.2 837.9L722.4 832.0L723.2 832.9L717.2 837.9ZM661.6 710.6L665.6 711.0L664.8 713.5L662.4 713.1ZM755.2 715.9L757.6 715.9L757.2 718.0L755.6 718.0ZM606.4 732.2L608.4 734.6L608.0 738.6L606.4 737.4L605.2 734.2ZM737.6 666.6L739.6 666.6L737.6 672.3L732.8 674.4L732.8 673.6L736.8 671.0ZM1022.0 711.4L1025.2 714.3L1024.0 714.7L1021.6 712.6ZM1057.2 642.4L1059.6 642.0L1058.8 644.3ZM1071.2 641.1L1074.0 642.9L1072.4 644.7ZM1086.8 632.7L1089.2 632.7L1088.4 634.6ZM968.0 635.5L971.6 635.5L970.4 636.4ZM962.0 630.3L964.4 630.3L963.6 631.8ZM995.2 615.5L999.2 615.5L997.6 616.5ZM954.0 579.7L956.4 579.1L956.0 580.7ZM203.3 484.1L203.1 488.4L200.6 491.2L197.6 490.4L195.8 487.5L194.0 484.1L195.3 480.2L197.4 477.1L200.2 478.8L202.9 480.0ZM197.3 477.0L196.9 478.9L195.8 480.7L194.3 479.8L193.2 478.8L192.6 477.0L193.2 475.2L194.1 473.3L195.7 473.8L197.3 474.6ZM218.9 481.5L218.2 483.2L216.1 485.4L213.3 487.0L211.1 488.0L209.9 487.8L209.6 486.9L211.8 484.9L214.3 482.5L216.5 482.2ZM179.2 498.1L177.6 497.6L175.2 496.4L172.1 492.7L170.6 489.5L171.1 488.4L172.8 489.0L175.1 490.1L177.6 493.7L179.8 497.0ZM191.1 499.8L191.2 501.2L189.9 501.6L188.8 501.6L187.7 501.1L187.5 499.8L187.5 498.5L188.8 498.1L190.1 497.8L190.9 498.7ZM187.6 504.9L187.0 505.5L186.4 506.0L185.4 505.7L184.7 505.4L184.3 504.9L184.4 504.3L185.3 503.9L186.3 503.9L187.0 504.4ZM120.4 498.5L118.5 498.6L115.1 497.1L111.6 493.9L108.2 490.3L108.0 488.1L111.4 489.5L114.3 490.6L117.7 493.6L120.4 496.7ZM195.3 457.7L194.7 459.0L193.3 460.0L191.5 460.0L190.0 459.2L188.8 457.7L190.2 456.3L191.3 454.9L193.5 454.9L194.8 456.2ZM201.6 460.7L201.0 462.0L200.1 462.9L199.0 462.8L198.1 462.0L197.4 460.7L198.0 459.3L198.8 458.0L200.3 458.0L201.5 459.0ZM125.5 458.7L125.3 459.8L124.2 460.1L123.1 460.2L122.5 459.4L121.7 458.7L122.0 457.7L123.1 457.1L124.3 457.1L124.9 457.9ZM148.8 461.9L148.4 462.4L147.7 462.9L146.7 462.9L146.1 462.4L145.5 461.9L146.1 461.3L146.8 460.9L147.7 460.9L148.5 461.2ZM257.0 534.9L257.1 536.6L255.4 537.5L253.4 537.4L252.2 536.2L251.1 534.9L252.1 533.5L253.6 532.9L255.3 532.5L256.5 533.6ZM232.7 537.4L232.4 539.1L231.2 539.8L229.6 540.8L228.4 539.2L227.8 537.4L228.1 535.4L229.7 534.3L231.3 534.7L232.5 535.7ZM310.6 507.8L310.9 508.9L307.9 510.9L303.0 512.5L298.6 513.5L297.4 512.6L298.3 511.2L302.2 509.3L306.5 507.2L310.7 506.5ZM318.4 525.8L318.3 527.0L317.3 529.0L314.6 530.7L312.3 532.1L310.3 532.5L311.7 530.4L312.8 528.6L315.0 526.7L317.0 525.9ZM336.3 525.2L336.4 527.2L334.8 527.6L333.2 528.4L332.3 526.9L331.5 525.2L332.0 523.4L333.3 522.3L334.9 522.4L336.0 523.6ZM334.1 508.8L333.3 509.5L330.7 508.9L328.1 507.0L326.3 505.3L326.1 504.1L326.6 503.2L329.4 504.2L332.5 505.8L334.6 507.8ZM356.3 508.8L353.3 509.2L347.7 507.8L342.2 506.0L337.0 503.3L337.1 501.8L340.0 501.6L343.6 501.6L348.8 504.0L354.3 506.5ZM313.2 493.2L312.6 494.0L311.8 494.5L310.7 494.5L309.8 494.0L308.9 493.2L309.3 492.2L310.5 491.5L311.8 492.0L312.8 492.4ZM320.0 500.4L319.7 501.2L318.2 501.6L316.3 501.9L314.7 501.3L314.0 500.4L315.0 499.5L316.3 498.7L318.2 499.0L319.8 499.5ZM184.0 546.7L183.9 547.2L182.0 547.9L179.7 548.6L178.3 548.6L177.6 548.4L178.1 547.9L179.4 547.2L181.6 546.7L183.4 546.5ZM203.8 545.3L203.6 546.0L200.9 547.0L197.9 547.6L195.4 548.1L194.6 547.7L194.6 547.1L197.2 546.1L200.2 545.4L202.4 545.2ZM207.8 560.8L207.3 564.1L206.5 565.8L205.7 566.7L204.8 564.8L204.7 560.8L205.0 557.5L205.6 554.8L206.6 554.8L207.3 557.4ZM213.7 571.4L213.6 572.5L212.4 573.0L211.0 573.1L210.0 572.4L209.6 571.4L210.3 570.7L211.1 569.9L212.3 570.2L213.4 570.5ZM143.6 544.5L143.5 545.2L142.6 545.4L141.7 545.4L141.0 545.1L140.9 544.5L140.7 543.8L141.8 543.7L142.7 543.4L143.4 543.9ZM153.2 546.6L153.1 547.2L152.3 547.4L151.6 547.6L150.9 547.2L150.9 546.6L150.9 545.9L151.6 545.4L152.3 545.8L152.8 546.1ZM226.6 493.2L226.5 494.1L225.2 494.7L223.6 494.8L222.2 494.2L221.9 493.2L222.1 492.3L223.7 491.9L225.3 491.6L226.7 492.2ZM227.1 498.3L226.5 499.2L225.5 499.6L224.3 499.8L223.2 499.3L222.8 498.3L223.2 497.4L224.2 496.6L225.6 496.8L226.4 497.5ZM234.1 503.4L234.0 504.5L232.7 505.0L231.5 504.7L230.4 504.3L229.9 503.4L230.3 502.5L231.4 501.9L232.6 502.1L233.9 502.4ZM251.5 509.2L250.7 509.9L249.5 510.2L247.9 510.5L246.8 509.9L245.8 509.2L246.8 508.5L248.1 508.2L249.5 508.2L250.9 508.5ZM254.6 515.1L254.2 515.8L252.9 516.0L251.7 516.0L250.6 515.7L250.3 515.1L251.0 514.6L251.8 514.2L252.9 514.3L254.3 514.4ZM238.3 526.5L237.5 527.1L236.8 527.8L235.5 527.6L234.2 527.3L234.4 526.5L234.2 525.6L235.5 525.3L236.8 525.2L237.8 525.7ZM247.4 527.1L246.5 527.7L245.6 528.3L244.1 528.0L242.4 527.9L242.1 527.1L242.7 526.4L244.0 526.1L245.6 525.8L246.6 526.4ZM333.5 490.2L333.2 491.1L332.3 491.9L331.0 491.5L330.0 491.0L329.7 490.2L329.9 489.3L330.9 488.7L332.2 488.6L332.9 489.5ZM328.9 515.6L328.1 516.5L327.0 516.8L325.8 517.2L325.1 516.4L324.8 515.6L325.1 514.8L325.9 514.1L327.2 514.0L328.0 514.8ZM302.9 525.2L302.8 525.8L302.1 526.2L301.2 526.1L300.4 525.8L300.0 525.2L300.2 524.6L301.2 524.3L302.0 524.4L302.9 524.6ZM312.1 543.5L312.1 544.2L310.5 544.4L309.0 544.5L307.7 544.1L306.9 543.5L307.8 543.0L308.9 542.5L310.5 542.5L312.0 542.9ZM305.4 550.1L304.4 550.9L303.4 551.6L302.0 551.3L300.7 550.9L300.2 550.1L300.3 549.1L301.8 548.6L303.4 548.7L304.6 549.2ZM291.0 541.5L290.7 542.1L289.5 542.5L288.3 542.4L287.0 542.2L286.6 541.5L287.1 540.8L288.3 540.6L289.5 540.6L290.6 540.9ZM276.0 543.5L275.4 544.1L274.6 544.3L273.7 544.6L273.1 544.0L272.6 543.5L272.9 542.9L273.8 542.7L274.6 542.6L275.2 543.0ZM230.9 545.3L230.5 545.7L230.0 546.2L229.0 546.2L228.4 545.8L228.2 545.3L228.2 544.9L228.9 544.4L230.0 544.4L230.7 544.9ZM232.9 551.4L232.9 552.0L232.0 552.2L231.1 552.2L230.2 551.9L230.0 551.4L230.5 551.0L231.0 550.6L232.0 550.6L232.7 551.0ZM235.5 556.5L235.5 557.0L234.8 557.3L234.0 557.2L233.3 557.0L233.1 556.5L233.2 556.0L233.9 555.6L234.8 555.7L235.4 556.0ZM135.3 573.0L135.1 573.6L133.7 573.9L132.2 573.9L130.6 573.7L130.2 573.0L131.3 572.5L132.3 572.1L133.7 572.2L135.2 572.3ZM167.9 566.9L167.9 567.5L167.0 567.8L166.1 567.8L165.1 567.6L164.8 566.9L165.1 566.2L166.0 565.8L166.9 566.0L167.6 566.3ZM185.4 484.6L184.8 485.2L183.8 485.4L182.6 485.6L181.6 485.2L181.2 484.6L181.9 484.1L182.6 483.5L183.9 483.6L184.8 484.1ZM183.8 495.8L183.3 496.3L182.6 496.6L181.9 496.6L180.9 496.5L180.9 495.8L181.0 495.1L181.9 494.9L182.7 494.9L183.4 495.2ZM213.3 505.9L217.8 504.9L219.8 512.0L222.9 522.2L224.3 529.3L221.9 531.3L218.8 526.3L215.8 518.1L212.7 512.0ZM205.6 507.0L209.7 505.9L210.7 514.1L213.8 522.2L216.8 530.3L213.8 532.3L210.7 526.3L206.6 520.2L204.6 513.0ZM158.9 474.5L167.0 468.4L181.3 467.3L189.4 470.4L177.2 471.8L163.0 476.9ZM69.3 470.2L75.4 479.0L84.9 489.9L89.7 499.4L99.9 515.7L108.0 526.6L116.2 540.2L110.7 540.2L94.4 526.6L83.5 518.5L75.4 504.9L69.3 489.9ZM406.4 762.7L402.4 765.9L398.4 770.7L400.8 771.1L404.8 768.3L408.8 765.5ZM971.4 587.1L970.7 587.9L970.1 588.5L969.1 588.3L968.0 588.1L968.1 587.1L968.3 586.3L969.0 585.6L970.1 585.5L970.8 586.3ZM967.3 602.3L966.8 603.1L966.1 603.7L965.0 603.4L964.4 602.9L963.9 602.3L964.3 601.7L964.9 601.1L966.0 601.2L967.0 601.5ZM973.4 611.5L972.6 612.0L972.0 612.4L971.1 612.4L970.2 612.1L969.9 611.5L970.2 610.8L971.0 610.5L972.2 610.4L973.1 610.8ZM971.2 622.7L971.1 623.3L970.2 623.9L968.9 623.9L967.9 623.4L967.7 622.7L968.0 622.0L968.8 621.3L970.2 621.4L971.0 622.0ZM961.3 630.8L961.0 631.5L960.2 632.0L959.0 632.0L958.3 631.4L957.9 630.8L957.9 630.0L959.1 629.8L960.1 629.8L960.8 630.2ZM954.3 634.8L953.5 635.4L952.9 636.2L951.7 636.1L951.0 635.5L950.2 634.8L950.7 634.1L951.6 633.6L952.9 633.5L954.0 634.0ZM966.4 630.8L966.0 631.5L965.1 632.1L964.0 631.8L962.8 631.6L962.4 630.8L962.9 630.0L964.0 629.8L964.9 629.8L966.0 630.0ZM972.4 644.0L971.9 644.6L971.1 645.0L970.0 645.1L969.4 644.5L968.6 644.0L969.5 643.5L970.0 643.0L971.1 642.9L971.7 643.5ZM942.8 631.8L942.3 632.4L941.6 632.7L940.7 632.7L939.7 632.5L939.5 631.8L939.7 631.2L940.6 630.8L941.6 630.8L942.5 631.2ZM983.3 634.8L983.2 635.6L982.3 636.1L981.2 636.0L980.6 635.5L980.0 634.8L980.3 634.1L981.2 633.6L982.3 633.6L982.9 634.2ZM1000.2 616.8L999.9 617.6L998.2 617.8L996.6 618.1L995.2 617.6L994.9 616.8L995.6 616.1L996.6 615.5L998.3 615.6L999.5 616.1ZM987.7 638.9L987.2 639.7L986.2 639.9L985.2 640.2L984.3 639.7L984.0 638.9L984.7 638.3L985.4 637.9L986.4 637.6L987.1 638.2ZM914.4 629.8L913.9 630.3L913.2 630.8L912.1 630.9L911.3 630.4L911.2 629.8L911.1 629.1L912.1 628.7L913.1 628.9L913.9 629.2Z" fill="#d7dde5" stroke="#d7dde5" stroke-width=".3" stroke-linejoin="round"/><path d="M238.8 553.1L243.2 552.2L245.6 553.9L251.2 551.6L255.6 548.9L257.6 554.2L263.2 553.6L267.2 553.1L269.2 554.5L268.8 550.4L267.2 546.3L262.4 541.5L254.4 540.2L250.4 543.3L247.2 546.3L242.4 549.8ZM256.8 581.3L259.6 581.3L262.0 577.5L262.0 571.5L261.2 568.2L262.8 564.2L265.2 562.0L267.2 558.8L264.8 557.4L261.2 558.3L259.2 559.1L256.8 562.5L255.2 565.6L257.6 564.8L256.0 568.7L256.4 572.0L255.6 574.2L256.0 578.0ZM268.4 558.5L273.2 561.1L274.0 567.0L271.6 570.4L275.2 568.4L277.4 574.2L280.4 572.0L281.6 565.9L282.0 561.7L283.4 565.4L286.8 565.9L287.6 564.2L286.4 560.8L283.6 557.7L280.4 556.8L277.2 556.2L273.2 556.0L270.8 555.7L270.4 557.4ZM273.4 581.3L276.4 582.6L280.4 582.3L286.8 578.8L291.6 575.0L288.0 575.0L285.2 576.4L282.0 576.1L277.2 579.7L274.8 579.4ZM288.0 572.6L289.6 570.7L295.2 569.0L301.2 567.6L302.4 571.2L296.8 572.9L291.2 572.9ZM139.2 455.2L145.2 450.2L151.2 443.3L163.2 439.0L169.2 439.9L161.2 445.9L157.2 450.2L152.4 453.5L147.2 456.4ZM263.6 717.2L267.2 717.2L268.0 720.0L264.8 719.6ZM327.2 827.5L330.0 828.3L332.0 831.2L329.6 830.4ZM301.2 567.6L306.0 563.7L310.4 561.4L313.2 559.1L317.2 555.7L322.4 552.8L322.4 553.1L317.2 556.5L313.2 560.3L310.4 562.5L306.0 564.8L301.6 568.2ZM437.6 802.9L442.4 802.9L444.0 804.1L440.0 804.9L437.2 805.3ZM408.0 780.3L409.6 780.3L410.0 785.1L408.4 785.1ZM425.6 839.6L427.2 839.6L426.8 842.5L425.6 842.1ZM400.8 847.2L406.0 846.8L405.6 848.5L401.2 848.9ZM388.8 865.4L390.4 865.4L389.6 870.2L388.4 870.2ZM282.8 652.0L284.8 652.0L284.8 654.2L282.8 654.2ZM155.6 581.8L158.4 581.8L158.8 586.1L156.4 586.1ZM723.6 583.9L719.6 581.8L719.2 579.7L718.0 577.0L718.8 573.1L721.6 571.5L721.6 567.6L723.2 564.2L726.0 562.0L728.0 558.5L730.0 554.5L733.2 553.9L735.2 554.5L737.2 556.8L741.6 556.8L737.2 560.8L740.8 565.6L743.2 566.5L748.8 563.1L753.2 562.0L753.6 560.8L749.2 560.8L747.2 558.5L746.4 556.2L748.4 554.5L753.2 553.3L757.6 551.0L761.2 550.4L764.4 550.4L761.2 553.3L759.2 556.2L758.0 559.1L755.2 561.4L756.4 563.7L759.2 565.9L763.2 568.7L766.0 571.5L768.4 573.7L771.2 575.3L773.2 578.0L773.6 581.8L771.2 583.4L767.2 585.0L763.2 584.5L759.2 585.3L755.2 584.5L752.4 583.4L749.2 581.3L747.2 579.4L743.2 579.7L739.2 579.7L735.2 581.3L732.4 583.9L728.4 583.9ZM713.6 587.9L717.2 585.2L720.0 585.0L723.2 585.3L726.8 586.3L723.2 587.6L719.2 588.2L716.4 588.2L712.8 589.5ZM797.2 574.2L796.4 568.7L794.4 565.4L797.2 560.3L801.2 558.0L803.2 555.1L807.2 553.9L811.2 551.6L814.8 551.6L819.2 553.3L819.6 556.2L818.4 560.3L813.2 561.4L812.0 565.4L808.4 565.9L810.8 568.7L812.4 573.1L817.2 575.9L818.0 580.2L821.6 579.1L825.6 580.7L824.8 585.0L819.2 585.0L818.8 587.1L819.2 590.3L820.8 593.4L822.4 596.0L822.8 601.1L822.8 605.6L815.2 607.1L811.2 606.8L807.2 603.6L802.8 599.0L804.4 593.9L805.2 588.7L808.8 588.2L805.2 586.6L803.2 582.3L801.6 579.7ZM840.4 565.4L842.0 558.5L844.4 557.4L843.2 562.0L842.0 565.9ZM847.2 555.7L851.2 552.8L854.0 554.5L850.4 556.2ZM901.2 560.8L901.6 556.2L905.2 552.8L909.2 553.9L913.2 554.5L917.2 553.9L921.2 553.3L924.4 554.5L921.2 555.7L915.2 556.2L909.2 557.4L905.2 560.3L903.6 563.1ZM912.0 577.5L917.2 575.6L920.8 576.4L918.4 578.6L914.4 578.8ZM932.0 557.4L935.2 555.7L934.8 558.0ZM940.0 546.9L946.4 544.5L944.4 547.5ZM1022.0 524.0L1027.2 522.7L1031.2 518.8L1037.2 514.2L1042.8 510.2L1045.6 502.7L1046.8 495.6L1044.0 495.6L1041.2 504.0L1037.2 510.8L1031.2 516.8L1026.4 521.4L1022.8 522.4ZM1014.4 491.4L1016.8 492.8L1018.0 500.6L1020.4 507.5L1021.6 511.5L1020.0 510.8L1018.0 506.1L1015.2 499.2L1013.6 493.5ZM1008.4 523.3L1010.0 524.0L1009.6 530.3L1008.4 529.7ZM976.4 530.3L980.4 530.3L980.0 532.5L976.8 532.2ZM1005.6 605.6L1008.4 604.6L1010.4 606.6L1008.0 607.6ZM1135.2 562.0L1138.4 562.0L1138.0 565.4L1135.6 564.8ZM731.2 464.1L737.2 461.7L738.8 457.6L737.2 453.5L731.2 449.3L727.2 452.7L728.4 459.2ZM748.0 456.0L752.4 452.7L750.4 446.8L745.2 439.9L744.8 446.8L747.2 451.0ZM656.8 473.5L660.0 468.4L663.2 471.2L660.4 475.4ZM664.0 480.3L665.6 474.2L666.8 474.2L665.2 480.3ZM715.2 471.9L718.4 471.2L717.6 477.3L719.6 479.6L716.8 477.7ZM758.4 477.3L760.4 471.9L762.8 474.2L761.6 478.8ZM800.4 505.4L804.0 498.5L807.2 497.8L804.0 503.3L802.4 508.8ZM813.2 496.4L821.2 494.9L819.2 497.1ZM740.4 552.2L745.2 548.6L748.0 549.8L743.2 552.8ZM787.6 604.1L788.4 599.5L790.4 601.1L790.0 604.6ZM776.8 597.5L780.0 595.4L781.6 598.0L778.4 599.0ZM787.2 587.1L788.8 588.2L789.6 589.7L788.0 589.2ZM740.0 596.0L741.6 595.4L741.6 598.0L740.4 598.0ZM734.4 764.3L737.2 763.9L741.2 763.7L743.6 765.1L745.2 766.7L743.6 769.1L742.4 772.3L740.8 774.3L738.8 775.1L735.2 775.5L734.0 773.1L734.2 769.1ZM724.8 778.7L725.6 783.1L726.4 787.1L725.2 791.2L729.2 795.2L732.0 800.4L729.2 798.0L728.0 794.4L724.4 789.1L724.0 785.1L723.6 781.1ZM743.2 803.3L745.6 807.3L746.8 811.4L746.8 815.5L748.4 819.6L748.0 823.3L746.0 822.5L744.4 817.6L744.0 811.4L742.8 805.3ZM751.6 747.1L752.4 751.1L754.0 755.1L752.8 754.7L750.8 749.9ZM732.4 755.9L728.8 760.3L730.8 759.9L733.2 756.7ZM724.8 765.5L726.4 765.9L726.0 767.9L724.8 767.5ZM723.2 771.5L724.4 771.9L724.0 774.7L722.8 774.3ZM721.2 799.6L723.6 800.0L722.8 802.9L721.2 802.5ZM715.2 837.9L722.4 832.0L723.2 832.9L717.2 837.9ZM661.6 710.6L665.6 711.0L664.8 713.5L662.4 713.1ZM755.2 715.9L757.6 715.9L757.2 718.0L755.6 718.0ZM606.4 732.2L608.4 734.6L608.0 738.6L606.4 737.4L605.2 734.2ZM737.6 666.6L739.6 666.6L737.6 672.3L732.8 674.4L732.8 673.6L736.8 671.0ZM1022.0 711.4L1025.2 714.3L1024.0 714.7L1021.6 712.6ZM1057.2 642.4L1059.6 642.0L1058.8 644.3ZM1071.2 641.1L1074.0 642.9L1072.4 644.7ZM1086.8 632.7L1089.2 632.7L1088.4 634.6ZM968.0 635.5L971.6 635.5L970.4 636.4ZM962.0 630.3L964.4 630.3L963.6 631.8ZM995.2 615.5L999.2 615.5L997.6 616.5ZM954.0 579.7L956.4 579.1L956.0 580.7ZM203.3 484.1L203.1 488.4L200.6 491.2L197.6 490.4L195.8 487.5L194.0 484.1L195.3 480.2L197.4 477.1L200.2 478.8L202.9 480.0ZM197.3 477.0L196.9 478.9L195.8 480.7L194.3 479.8L193.2 478.8L192.6 477.0L193.2 475.2L194.1 473.3L195.7 473.8L197.3 474.6ZM218.9 481.5L218.2 483.2L216.1 485.4L213.3 487.0L211.1 488.0L209.9 487.8L209.6 486.9L211.8 484.9L214.3 482.5L216.5 482.2ZM179.2 498.1L177.6 497.6L175.2 496.4L172.1 492.7L170.6 489.5L171.1 488.4L172.8 489.0L175.1 490.1L177.6 493.7L179.8 497.0ZM191.1 499.8L191.2 501.2L189.9 501.6L188.8 501.6L187.7 501.1L187.5 499.8L187.5 498.5L188.8 498.1L190.1 497.8L190.9 498.7ZM187.6 504.9L187.0 505.5L186.4 506.0L185.4 505.7L184.7 505.4L184.3 504.9L184.4 504.3L185.3 503.9L186.3 503.9L187.0 504.4ZM120.4 498.5L118.5 498.6L115.1 497.1L111.6 493.9L108.2 490.3L108.0 488.1L111.4 489.5L114.3 490.6L117.7 493.6L120.4 496.7ZM195.3 457.7L194.7 459.0L193.3 460.0L191.5 460.0L190.0 459.2L188.8 457.7L190.2 456.3L191.3 454.9L193.5 454.9L194.8 456.2ZM201.6 460.7L201.0 462.0L200.1 462.9L199.0 462.8L198.1 462.0L197.4 460.7L198.0 459.3L198.8 458.0L200.3 458.0L201.5 459.0ZM125.5 458.7L125.3 459.8L124.2 460.1L123.1 460.2L122.5 459.4L121.7 458.7L122.0 457.7L123.1 457.1L124.3 457.1L124.9 457.9ZM148.8 461.9L148.4 462.4L147.7 462.9L146.7 462.9L146.1 462.4L145.5 461.9L146.1 461.3L146.8 460.9L147.7 460.9L148.5 461.2ZM257.0 534.9L257.1 536.6L255.4 537.5L253.4 537.4L252.2 536.2L251.1 534.9L252.1 533.5L253.6 532.9L255.3 532.5L256.5 533.6ZM232.7 537.4L232.4 539.1L231.2 539.8L229.6 540.8L228.4 539.2L227.8 537.4L228.1 535.4L229.7 534.3L231.3 534.7L232.5 535.7ZM310.6 507.8L310.9 508.9L307.9 510.9L303.0 512.5L298.6 513.5L297.4 512.6L298.3 511.2L302.2 509.3L306.5 507.2L310.7 506.5ZM318.4 525.8L318.3 527.0L317.3 529.0L314.6 530.7L312.3 532.1L310.3 532.5L311.7 530.4L312.8 528.6L315.0 526.7L317.0 525.9ZM336.3 525.2L336.4 527.2L334.8 527.6L333.2 528.4L332.3 526.9L331.5 525.2L332.0 523.4L333.3 522.3L334.9 522.4L336.0 523.6ZM334.1 508.8L333.3 509.5L330.7 508.9L328.1 507.0L326.3 505.3L326.1 504.1L326.6 503.2L329.4 504.2L332.5 505.8L334.6 507.8ZM356.3 508.8L353.3 509.2L347.7 507.8L342.2 506.0L337.0 503.3L337.1 501.8L340.0 501.6L343.6 501.6L348.8 504.0L354.3 506.5ZM313.2 493.2L312.6 494.0L311.8 494.5L310.7 494.5L309.8 494.0L308.9 493.2L309.3 492.2L310.5 491.5L311.8 492.0L312.8 492.4ZM320.0 500.4L319.7 501.2L318.2 501.6L316.3 501.9L314.7 501.3L314.0 500.4L315.0 499.5L316.3 498.7L318.2 499.0L319.8 499.5ZM184.0 546.7L183.9 547.2L182.0 547.9L179.7 548.6L178.3 548.6L177.6 548.4L178.1 547.9L179.4 547.2L181.6 546.7L183.4 546.5ZM203.8 545.3L203.6 546.0L200.9 547.0L197.9 547.6L195.4 548.1L194.6 547.7L194.6 547.1L197.2 546.1L200.2 545.4L202.4 545.2ZM207.8 560.8L207.3 564.1L206.5 565.8L205.7 566.7L204.8 564.8L204.7 560.8L205.0 557.5L205.6 554.8L206.6 554.8L207.3 557.4ZM213.7 571.4L213.6 572.5L212.4 573.0L211.0 573.1L210.0 572.4L209.6 571.4L210.3 570.7L211.1 569.9L212.3 570.2L213.4 570.5ZM143.6 544.5L143.5 545.2L142.6 545.4L141.7 545.4L141.0 545.1L140.9 544.5L140.7 543.8L141.8 543.7L142.7 543.4L143.4 543.9ZM153.2 546.6L153.1 547.2L152.3 547.4L151.6 547.6L150.9 547.2L150.9 546.6L150.9 545.9L151.6 545.4L152.3 545.8L152.8 546.1ZM226.6 493.2L226.5 494.1L225.2 494.7L223.6 494.8L222.2 494.2L221.9 493.2L222.1 492.3L223.7 491.9L225.3 491.6L226.7 492.2ZM227.1 498.3L226.5 499.2L225.5 499.6L224.3 499.8L223.2 499.3L222.8 498.3L223.2 497.4L224.2 496.6L225.6 496.8L226.4 497.5ZM234.1 503.4L234.0 504.5L232.7 505.0L231.5 504.7L230.4 504.3L229.9 503.4L230.3 502.5L231.4 501.9L232.6 502.1L233.9 502.4ZM251.5 509.2L250.7 509.9L249.5 510.2L247.9 510.5L246.8 509.9L245.8 509.2L246.8 508.5L248.1 508.2L249.5 508.2L250.9 508.5ZM254.6 515.1L254.2 515.8L252.9 516.0L251.7 516.0L250.6 515.7L250.3 515.1L251.0 514.6L251.8 514.2L252.9 514.3L254.3 514.4ZM238.3 526.5L237.5 527.1L236.8 527.8L235.5 527.6L234.2 527.3L234.4 526.5L234.2 525.6L235.5 525.3L236.8 525.2L237.8 525.7ZM247.4 527.1L246.5 527.7L245.6 528.3L244.1 528.0L242.4 527.9L242.1 527.1L242.7 526.4L244.0 526.1L245.6 525.8L246.6 526.4ZM333.5 490.2L333.2 491.1L332.3 491.9L331.0 491.5L330.0 491.0L329.7 490.2L329.9 489.3L330.9 488.7L332.2 488.6L332.9 489.5ZM328.9 515.6L328.1 516.5L327.0 516.8L325.8 517.2L325.1 516.4L324.8 515.6L325.1 514.8L325.9 514.1L327.2 514.0L328.0 514.8ZM302.9 525.2L302.8 525.8L302.1 526.2L301.2 526.1L300.4 525.8L300.0 525.2L300.2 524.6L301.2 524.3L302.0 524.4L302.9 524.6ZM312.1 543.5L312.1 544.2L310.5 544.4L309.0 544.5L307.7 544.1L306.9 543.5L307.8 543.0L308.9 542.5L310.5 542.5L312.0 542.9ZM305.4 550.1L304.4 550.9L303.4 551.6L302.0 551.3L300.7 550.9L300.2 550.1L300.3 549.1L301.8 548.6L303.4 548.7L304.6 549.2ZM291.0 541.5L290.7 542.1L289.5 542.5L288.3 542.4L287.0 542.2L286.6 541.5L287.1 540.8L288.3 540.6L289.5 540.6L290.6 540.9ZM276.0 543.5L275.4 544.1L274.6 544.3L273.7 544.6L273.1 544.0L272.6 543.5L272.9 542.9L273.8 542.7L274.6 542.6L275.2 543.0ZM230.9 545.3L230.5 545.7L230.0 546.2L229.0 546.2L228.4 545.8L228.2 545.3L228.2 544.9L228.9 544.4L230.0 544.4L230.7 544.9ZM232.9 551.4L232.9 552.0L232.0 552.2L231.1 552.2L230.2 551.9L230.0 551.4L230.5 551.0L231.0 550.6L232.0 550.6L232.7 551.0ZM235.5 556.5L235.5 557.0L234.8 557.3L234.0 557.2L233.3 557.0L233.1 556.5L233.2 556.0L233.9 555.6L234.8 555.7L235.4 556.0ZM135.3 573.0L135.1 573.6L133.7 573.9L132.2 573.9L130.6 573.7L130.2 573.0L131.3 572.5L132.3 572.1L133.7 572.2L135.2 572.3ZM167.9 566.9L167.9 567.5L167.0 567.8L166.1 567.8L165.1 567.6L164.8 566.9L165.1 566.2L166.0 565.8L166.9 566.0L167.6 566.3ZM185.4 484.6L184.8 485.2L183.8 485.4L182.6 485.6L181.6 485.2L181.2 484.6L181.9 484.1L182.6 483.5L183.9 483.6L184.8 484.1ZM183.8 495.8L183.3 496.3L182.6 496.6L181.9 496.6L180.9 496.5L180.9 495.8L181.0 495.1L181.9 494.9L182.7 494.9L183.4 495.2ZM213.3 505.9L217.8 504.9L219.8 512.0L222.9 522.2L224.3 529.3L221.9 531.3L218.8 526.3L215.8 518.1L212.7 512.0ZM205.6 507.0L209.7 505.9L210.7 514.1L213.8 522.2L216.8 530.3L213.8 532.3L210.7 526.3L206.6 520.2L204.6 513.0ZM158.9 474.5L167.0 468.4L181.3 467.3L189.4 470.4L177.2 471.8L163.0 476.9ZM69.3 470.2L75.4 479.0L84.9 489.9L89.7 499.4L99.9 515.7L108.0 526.6L116.2 540.2L110.7 540.2L94.4 526.6L83.5 518.5L75.4 504.9L69.3 489.9ZM406.4 762.7L402.4 765.9L398.4 770.7L400.8 771.1L404.8 768.3L408.8 765.5ZM971.4 587.1L970.7 587.9L970.1 588.5L969.1 588.3L968.0 588.1L968.1 587.1L968.3 586.3L969.0 585.6L970.1 585.5L970.8 586.3ZM967.3 602.3L966.8 603.1L966.1 603.7L965.0 603.4L964.4 602.9L963.9 602.3L964.3 601.7L964.9 601.1L966.0 601.2L967.0 601.5ZM973.4 611.5L972.6 612.0L972.0 612.4L971.1 612.4L970.2 612.1L969.9 611.5L970.2 610.8L971.0 610.5L972.2 610.4L973.1 610.8ZM971.2 622.7L971.1 623.3L970.2 623.9L968.9 623.9L967.9 623.4L967.7 622.7L968.0 622.0L968.8 621.3L970.2 621.4L971.0 622.0ZM961.3 630.8L961.0 631.5L960.2 632.0L959.0 632.0L958.3 631.4L957.9 630.8L957.9 630.0L959.1 629.8L960.1 629.8L960.8 630.2ZM954.3 634.8L953.5 635.4L952.9 636.2L951.7 636.1L951.0 635.5L950.2 634.8L950.7 634.1L951.6 633.6L952.9 633.5L954.0 634.0ZM966.4 630.8L966.0 631.5L965.1 632.1L964.0 631.8L962.8 631.6L962.4 630.8L962.9 630.0L964.0 629.8L964.9 629.8L966.0 630.0ZM972.4 644.0L971.9 644.6L971.1 645.0L970.0 645.1L969.4 644.5L968.6 644.0L969.5 643.5L970.0 643.0L971.1 642.9L971.7 643.5ZM942.8 631.8L942.3 632.4L941.6 632.7L940.7 632.7L939.7 632.5L939.5 631.8L939.7 631.2L940.6 630.8L941.6 630.8L942.5 631.2ZM983.3 634.8L983.2 635.6L982.3 636.1L981.2 636.0L980.6 635.5L980.0 634.8L980.3 634.1L981.2 633.6L982.3 633.6L982.9 634.2ZM1000.2 616.8L999.9 617.6L998.2 617.8L996.6 618.1L995.2 617.6L994.9 616.8L995.6 616.1L996.6 615.5L998.3 615.6L999.5 616.1ZM987.7 638.9L987.2 639.7L986.2 639.9L985.2 640.2L984.3 639.7L984.0 638.9L984.7 638.3L985.4 637.9L986.4 637.6L987.1 638.2ZM914.4 629.8L913.9 630.3L913.2 630.8L912.1 630.9L911.3 630.4L911.2 629.8L911.1 629.1L912.1 628.7L913.1 628.9L913.9 629.2Z" fill="url(#wv)"/><path d="M43.2 463.3L228.0 463.3M127.2 463.3L127.2 508.8L132.4 514.8L141.2 527.2L148.8 536.0L150.9 539.6M167.2 463.3L167.2 539.6M199.2 463.3L201.6 539.6M226.6 537.2L226.6 515.5L251.2 487.0M289.2 524.0L289.2 548.6L291.2 552.2L297.2 557.4L301.2 560.3L309.2 559.7L309.6 562.5M378.8 524.3L378.8 520.8L352.0 520.8L349.2 514.8L341.6 514.8L337.6 504.0L351.2 500.6L353.2 493.5L349.2 460.9M331.0 549.2L339.6 546.0L342.0 545.4M110.4 579.7L163.0 579.7M111.2 556.0L116.0 559.7L122.4 559.1L131.2 557.4L139.4 557.4M139.1 539.6L139.1 555.1L141.2 560.3L139.1 567.6L139.1 579.7M127.2 579.7L127.2 595.4L148.8 615.5L148.4 626.5M151.0 579.7L151.0 609.6L148.4 610.1L148.8 615.5M151.0 605.6L228.8 605.6M163.0 585.0L199.0 585.0M171.0 585.0L171.0 633.0M163.0 563.1L163.0 585.0M143.0 539.6L143.0 545.7L149.2 559.7L153.2 564.8L163.0 565.9L163.0 563.1L191.0 563.1M191.0 539.6L191.0 585.0M191.0 557.7L220.8 557.7M191.0 574.2L213.2 574.2L221.2 577.0M199.0 590.3L226.0 590.3M199.0 585.0L199.0 605.6M195.2 605.6L195.2 608.1L207.2 608.1L207.2 617.4L215.2 619.9L221.2 621.3L229.2 622.3L231.0 625.1L231.0 634.6L233.2 634.6L232.0 640.6M195.0 608.1L195.0 629.9L180.8 629.9M218.4 539.6L220.0 548.6L220.8 557.4L221.2 571.5M221.2 571.5L242.4 571.5M224.0 587.1L241.6 587.1M221.2 577.0L223.6 583.4L226.0 590.3L228.8 594.9L228.8 608.1M228.8 608.1L246.4 608.1L246.0 610.6L248.4 610.6M231.0 625.1L242.4 625.1M236.0 564.8L242.4 571.5L246.4 580.7L241.6 588.2L246.4 596.5L250.4 605.6L248.4 610.6L243.6 620.3L242.4 625.1L241.2 634.6L248.0 634.6L248.8 638.3M236.0 564.8L238.0 556.8L238.8 553.3M244.8 577.0L256.0 577.0M245.6 554.2L254.8 558.0L256.8 562.5M250.4 605.6L257.2 601.1L263.2 600.6L268.0 594.9L276.8 598.5L285.2 587.1M249.2 608.1L280.4 607.6M246.0 615.5L274.8 615.5M254.4 615.5L253.6 637.8M264.8 615.5L267.2 628.5L267.2 634.6L256.8 634.6L257.2 637.8M267.2 636.0L279.2 636.4L281.2 636.0M274.8 615.5L278.4 622.3L282.8 629.4M274.8 615.5L278.0 614.5L283.2 615.0L284.0 616.5L288.4 616.5L293.0 621.1M272.4 607.6L303.6 607.8M257.2 581.3L257.2 593.9L255.2 601.1M268.0 581.3L268.0 594.9M258.4 581.0L273.2 581.2M285.2 578.0L285.2 591.7L304.0 591.7M288.0 579.7L306.0 579.7L308.4 583.1M276.8 598.5L280.4 604.6L286.0 603.1L289.2 598.0L294.0 593.4L296.4 593.9M272.4 607.6L276.8 604.1L279.6 603.1M313.8 563.1L314.0 575.9L313.2 579.4L312.4 584.5M321.2 563.1L317.2 575.7L314.0 575.7M313.2 579.4L320.0 579.5L321.6 579.7M322.8 561.4L323.2 572.0L324.4 573.7M1123.2 825.4L1123.2 905.1M1159.2 832.0L1159.2 872.9L1171.2 872.9L1171.2 905.1M1123.2 872.9L1159.2 872.9M1171.2 886.4L1203.2 886.4L1213.2 885.9L1221.2 882.7M366.4 820.4L360.8 809.4L367.2 800.4L374.0 800.0L374.4 794.4L380.4 794.4M374.4 794.4L373.2 773.9L380.4 757.1M380.4 794.4L406.0 804.5L413.6 786.3L423.2 769.9M406.0 804.5L403.6 816.7L396.8 829.5L394.4 837.1L376.0 837.1M413.6 786.3L417.6 795.2L423.2 806.1L422.4 817.1L403.6 816.7M423.2 806.1L433.2 807.3L443.2 800.4L445.2 794.8L442.4 777.1M422.4 817.1L430.4 822.5L439.2 825.4L446.4 829.5L448.4 838.3M394.4 837.1L403.6 844.2L403.2 846.8L418.0 846.8L422.0 857.5L430.4 857.5L428.4 861.0M403.2 846.8L395.2 857.1L390.4 864.0M395.2 857.1L408.0 859.7L413.2 869.3M390.0 864.5L392.4 873.8L412.8 873.8M445.2 794.8L458.4 794.4L467.2 795.2M443.2 800.4L454.4 802.5L461.6 807.3M446.4 829.5L440.0 846.8L443.2 852.3" fill="none" stroke="#e3e3e3" stroke-width=".7" stroke-linejoin="round"/><path d="M114.0 539.6L226.6 539.6L226.6 537.2L228.8 541.5L235.2 542.1L241.2 545.1L247.2 545.1L249.2 545.7L253.6 543.9L268.0 552.2L269.2 554.5L272.8 556.8L273.2 558.5L277.2 561.4L277.6 574.2L277.2 576.4L274.8 578.6L274.8 579.7L277.6 581.3L282.4 578.6L291.2 575.3L291.0 572.9L290.4 571.8L292.4 570.8L300.0 570.8L301.6 568.2L306.0 564.0L308.4 563.1L321.2 563.1L321.6 562.0L324.0 560.8L326.0 558.0L327.2 553.3L330.4 548.9L331.6 550.4L336.0 551.0L336.0 559.1L337.6 561.4L339.2 563.7M43.2 410.2L43.2 460.9L50.8 462.5L57.2 471.2L65.2 464.9L67.2 468.8L73.6 475.8L79.6 487.7L87.2 493.5L86.8 500.6L84.8 502.7M138.8 627.4L148.4 626.5L148.0 627.5L162.9 633.0L174.4 633.0L174.4 630.9L181.2 630.9L187.6 636.4L189.2 641.1L194.4 643.8L196.4 640.6L201.6 640.1L206.0 647.0L209.2 650.6L210.8 655.6L217.2 657.8L218.6 657.6M238.4 706.5L238.4 703.2L240.4 699.8L245.6 699.8L241.6 695.0L243.2 692.7L250.6 692.7L250.6 691.9L254.0 689.8M250.6 692.7L250.4 700.7L251.6 700.7M254.4 701.5L250.4 704.8L249.8 706.9L246.8 709.6M249.8 706.9L253.2 708.5L256.0 711.0M258.0 712.6L260.4 709.4L264.0 709.2L267.2 706.1L274.4 704.4M264.4 720.4L268.4 720.6L272.6 721.2M275.6 732.8L275.6 729.0L276.8 726.7M295.6 736.0L298.4 733.4L297.6 730.4M320.2 691.7L319.4 689.4L320.4 684.7M322.0 717.6L318.0 720.4L315.2 727.7L317.6 731.4L317.6 735.4L323.2 737.0L329.6 740.7L337.2 740.3L336.0 743.9L336.0 749.1L338.0 751.5L336.0 753.9L338.8 758.3L339.6 760.3M339.6 760.3L335.6 758.1L328.0 758.3L327.8 760.8L330.8 762.5L327.0 762.7L327.0 765.7L329.6 769.1L327.4 781.9M327.4 781.9L324.4 780.3L327.0 775.9L315.6 774.7L314.4 772.3L308.0 765.9L306.0 765.5L302.0 763.5L297.6 763.5L292.0 759.5M306.0 765.5L304.8 771.1L300.8 775.5L296.0 777.1L293.6 778.7L291.2 785.1L286.8 782.3L286.0 778.7M327.4 781.9L315.6 785.5L311.6 794.8L315.6 801.7L318.4 805.3L324.8 803.3L324.8 809.4L328.8 809.2M328.8 809.2L332.4 815.5L331.2 820.0L331.6 822.5L329.6 825.0L328.8 828.3L331.2 830.8L328.8 835.4L329.2 836.2L325.6 839.8M329.2 836.2L331.6 842.5L333.2 846.3L334.4 853.2L335.6 858.8L339.2 859.7L338.0 864.0L333.6 866.2L333.2 874.2L334.0 877.3L330.8 880.9L328.4 884.1L327.2 891.0M339.2 859.7L342.4 854.5L349.6 858.8L351.6 855.3L356.6 856.4L359.6 846.8L370.8 843.8L374.6 847.4M328.8 809.2L335.2 807.9L345.6 804.1L346.0 812.2L349.6 815.5L356.0 817.6L363.2 819.6L366.0 825.8L366.4 831.2L373.6 831.2L374.0 835.4L377.2 839.2L374.6 847.4L375.6 855.8L384.4 856.6L385.6 864.0L390.0 864.5L388.8 871.1M356.6 856.4L363.2 863.2L375.2 869.3L376.8 871.1L372.8 878.2L382.0 879.1L388.8 871.1L392.0 871.5L392.4 876.9L387.2 880.9L383.2 884.1L376.8 891.9M339.6 760.3L345.2 761.9L351.2 757.5L353.6 756.3L350.4 749.5L355.6 750.7L356.4 749.1L363.2 747.1L364.4 744.3L361.6 741.3L362.8 738.2L366.0 736.6L367.2 731.0M364.4 744.3L367.6 745.1L366.8 747.1L368.4 749.1L368.0 755.9L372.0 760.3L378.0 757.1L381.2 757.5L383.6 757.1L386.8 754.9L389.2 755.9L395.2 756.3L397.6 752.7L400.4 748.7M378.6 741.5L378.0 744.3L375.2 749.1L378.0 751.9L381.2 757.5M391.2 742.3L389.2 745.5L391.2 750.7L389.2 755.9M571.8 580.2L574.4 579.1L580.8 579.9L582.4 581.8L579.6 585.0L579.2 589.2L577.2 592.1L579.2 594.9L578.4 599.5L577.2 603.1L577.6 604.6M600.0 572.3L601.6 574.0L604.4 574.8L610.0 575.3L613.0 576.4L614.4 577.2L619.8 577.2M617.4 526.5L620.0 528.8L624.0 533.5L626.6 532.5L630.4 536.3L632.6 536.9L640.0 539.6L637.6 548.0L635.2 549.2L631.6 553.9L631.2 556.5L634.4 555.1L635.2 558.0L634.4 562.3L635.4 564.8L634.8 566.8L638.0 567.9L637.2 569.8M635.2 558.0L639.2 557.4L641.0 554.8L643.2 558.3L644.4 554.5L647.6 553.9L649.0 552.2L651.2 552.8L656.0 551.3L656.8 553.3L662.0 554.5M637.6 548.0L641.6 546.9L645.6 548.3L645.4 551.0L649.0 552.2M645.6 548.3L648.8 548.3L651.2 549.2L656.0 548.0L659.2 548.6L658.8 544.5L662.4 541.2L656.8 535.0L655.6 531.6L658.8 531.0L664.4 527.2L666.4 528.1L667.2 525.3L665.6 520.1L665.6 516.8L663.8 514.8L664.8 512.2L664.2 508.1M636.0 512.2L635.4 516.8L634.0 517.5L634.4 521.1L631.0 522.1L632.0 524.6L631.2 528.8L632.0 532.8L632.6 536.9M620.8 524.9L624.2 524.6L627.2 524.3L630.6 526.2L630.0 528.8L631.2 528.8M641.8 501.3L645.0 502.0M666.4 528.1L670.4 529.1L672.6 530.3L674.8 531.0L678.0 531.6L679.4 533.2L682.6 536.6L685.2 537.2L687.6 538.4L690.8 537.8L697.4 539.0M662.4 541.2L666.0 542.1L667.2 539.6L671.6 541.2L675.0 542.1L677.8 540.5L679.8 538.7L682.6 536.6M675.0 542.1L675.8 545.7L678.6 547.2L682.4 546.6L683.2 545.4L686.4 544.8L689.2 542.7L694.0 543.6L695.8 543.3L697.4 539.0M675.8 545.7L673.2 547.5L673.0 551.6L671.6 552.5L669.8 553.3L665.4 555.1L662.0 554.5L660.8 556.2L661.6 558.5L662.2 559.7M661.6 560.6L665.6 560.3L668.4 560.3L669.8 556.2L673.4 554.5L671.6 552.5M673.4 554.5L676.0 557.7L680.8 558.8L682.8 558.0L688.2 556.5L692.0 555.1L695.2 548.6L698.8 546.0L695.8 543.3M698.8 546.0L706.8 547.5L712.0 546.0L713.6 544.2L717.2 548.6L719.6 552.2L720.0 560.6L725.8 561.1M713.6 544.2L718.4 543.0L724.0 546.3L726.8 552.8L727.6 555.1L723.2 556.2L720.0 560.6M688.2 556.5L693.2 562.0L692.8 564.2L697.2 564.8L698.0 567.6L699.2 569.8L708.8 570.7L715.2 567.9L721.4 570.1M698.0 567.6L696.8 573.1L699.0 575.0L696.6 578.0L699.0 583.1L704.4 582.1L708.4 583.7L712.6 581.3L716.4 579.1L719.2 579.7M712.6 581.3L713.6 583.1L711.4 586.3M687.2 591.8L689.6 589.7L691.2 585.8L699.0 583.1M684.8 580.5L686.0 576.4L689.2 578.6L689.2 583.4L691.2 585.8M670.2 562.0L674.8 561.7L679.2 562.5L683.2 563.7L684.6 563.7L683.8 567.0L685.2 571.2L681.2 576.7M670.2 562.0L672.0 567.6L677.6 574.2L681.2 576.7M684.6 563.7L683.2 560.3L682.8 558.0M685.2 571.2L688.4 575.3L689.2 578.6L693.2 578.0L696.6 578.0M685.8 504.4L698.4 505.1L697.6 500.2L692.2 498.8M698.4 505.1L701.2 507.8L702.8 516.2L700.0 519.1L701.8 524.0L703.6 528.5L698.0 536.3L697.4 539.0M701.2 507.8L704.8 508.1L709.6 505.4L710.2 501.6L713.6 498.5L713.6 495.6L719.8 492.4M691.4 492.8L695.6 490.6L706.8 490.3L713.6 495.6M704.6 479.8L708.4 478.8L713.2 482.2L716.6 482.2L718.6 487.4L719.8 492.4M716.6 482.2L717.2 477.3L716.8 471.2L719.2 467.6M719.8 492.4L730.8 496.4L730.8 501.3L738.0 511.2L733.2 512.9L734.4 520.1M701.8 524.0L708.4 521.1L718.4 523.3L729.2 525.3L734.4 520.1L742.4 518.5L749.6 531.0L759.2 534.1L767.8 536.0L766.4 546.6L760.2 551.0M718.4 458.8L724.4 452.7L732.4 439.0M653.0 471.2L654.4 464.1L657.2 462.5L656.4 455.2L658.8 452.3L655.8 449.3L656.4 444.2L655.6 438.1M767.2 572.0L776.8 572.9L782.4 576.4L786.8 575.6L790.0 577.0L793.0 580.2L796.4 583.4L798.8 583.9L801.6 580.5M773.4 582.3L777.2 582.6L781.0 584.5L787.2 583.4L793.0 580.2M781.0 584.5L781.8 589.7L786.4 591.8L784.8 598.5L786.4 604.6M787.2 583.4L789.6 586.1L791.2 592.3L793.4 596.0M786.4 591.8L793.4 596.0L798.4 592.1L800.6 593.4L799.2 596.5L802.8 598.3M751.0 610.8L753.8 609.3L754.0 606.6L759.2 606.6L763.2 607.1L770.0 605.1L776.6 605.1L779.6 603.8L786.4 604.6L788.8 610.8L791.8 615.0L789.6 617.7L788.8 620.6L791.8 624.7L798.6 630.8L798.0 634.6L801.4 639.4M776.6 605.1L772.2 608.8L772.8 618.4L762.4 623.5L754.6 628.5L750.2 626.3M751.0 617.2L753.6 619.4L750.6 623.2L750.2 626.3L749.4 628.0L749.2 632.2L747.2 641.3M747.6 624.7L750.6 623.2M744.2 633.2L746.8 641.5M762.4 623.5L764.0 629.2L755.2 632.2L759.2 636.9L757.2 639.2L751.4 642.9L747.0 642.2M764.0 629.2L768.8 630.1L775.6 634.1L786.0 642.9L793.4 643.3L797.0 643.8L798.0 645.9L801.0 645.9M793.4 643.3L795.2 639.4L799.0 639.2M778.4 698.6L780.0 694.4L784.0 694.4L792.8 695.0L795.2 696.3L800.0 691.3L803.6 689.4L815.2 687.7L819.6 697.5M815.2 687.7L827.2 683.4L829.8 674.9L828.0 671.8L817.4 670.7L813.6 665.7M828.0 671.8L830.4 666.2L831.4 662.2L832.6 662.0M810.4 662.9L812.0 663.8M804.0 555.4L801.2 553.6L803.2 552.8L800.0 547.5L795.6 546.9L793.2 543.3L795.2 538.4L794.8 534.4L800.8 534.4L802.4 529.7L810.4 522.4L816.4 522.4L820.8 524.0L825.2 527.2L830.0 530.0L833.2 526.9L841.6 527.2L845.2 530.3L852.8 528.5L854.0 525.6L847.2 521.7L851.2 518.5L850.0 516.2L851.6 514.2L855.6 514.2L852.0 510.5L851.2 507.8L863.2 505.4L868.0 505.4L880.0 500.6L883.2 498.1L890.4 498.5L892.0 506.8L900.8 507.8L902.2 507.1L914.4 504.7L913.2 507.8L918.8 512.2L927.6 528.8L930.0 525.3L933.2 528.8L940.8 527.2L942.8 528.5L948.4 536.0L954.4 534.7L956.6 539.0M956.6 539.0L950.4 543.3L949.2 551.3L939.2 550.4L936.4 560.0L937.6 562.0L928.8 562.8L930.4 573.4L928.0 579.4M928.0 579.4L923.2 575.3L911.2 574.8L904.4 573.1L901.2 577.0L891.2 576.7L891.0 578.3L883.2 582.9L879.6 586.1L874.0 584.2L871.2 574.8L855.2 571.5L841.6 560.0L831.2 563.1L831.2 583.4L826.0 579.4L819.2 579.1L817.2 581.0M831.2 583.4L835.6 583.4L841.6 575.9L847.2 578.6L847.6 582.9L854.8 584.5L857.2 590.3L864.8 595.7L873.4 600.6L873.2 603.8M822.8 603.8L828.8 600.0L836.0 599.5L844.4 603.1L851.8 607.3L852.0 612.3L856.4 614.3L859.6 611.3L865.2 609.1L870.0 603.1L873.2 603.8L878.4 604.6L884.4 604.8L888.0 601.1L892.4 599.0L893.6 607.1L900.4 603.3L906.8 604.3M878.4 604.6L879.6 596.0L876.8 593.9L881.6 592.3L884.4 586.1L888.8 585.0L890.0 589.2L885.2 592.6L891.2 593.4L902.0 593.1L902.4 597.5L906.8 598.3L906.8 604.3M902.0 593.1L903.2 589.7L914.8 585.0L920.0 584.5L928.0 579.4M891.0 578.3L892.4 583.9L896.0 584.7L899.6 585.8L895.2 588.7L890.0 589.2M852.0 612.3L849.4 619.6L850.8 632.2L854.4 634.6L850.6 639.9L854.4 645.6L858.4 647.2L858.4 652.0L860.4 654.0L854.6 656.4L853.6 660.9M850.6 639.9L857.2 642.0L863.6 642.0L872.4 639.9L872.8 635.0L878.4 632.9L884.4 630.3L885.2 624.7L888.4 623.5L886.8 620.3L891.6 620.1L893.6 614.5L892.0 610.3L897.2 606.3L906.8 604.3L910.8 607.6L911.2 611.1L918.4 613.0M880.0 667.5L882.4 664.8L891.2 664.4L888.4 658.7L887.6 654.7L885.2 652.9L888.8 648.4L894.8 648.6L899.2 642.9L902.8 639.2L905.2 634.6L905.6 630.3L908.8 628.5L905.6 625.1L902.4 618.6L907.2 617.2L915.2 615.5L918.4 613.0L922.8 618.4L922.0 622.3L925.2 626.3L920.8 627.5L922.2 633.2L931.2 638.3L935.6 637.8L942.8 642.4L950.4 646.8L952.8 648.6L959.8 649.0M931.2 638.3L927.6 644.7L934.8 648.8L940.4 651.3L945.6 652.0L950.4 654.7L959.4 655.6L959.8 649.0L962.8 651.5M962.8 651.5L966.0 647.5L973.6 649.3L975.6 653.3L966.4 654.2L962.8 651.5M973.6 649.3L982.4 644.5L988.8 643.3L993.6 646.1L996.6 647.2M960.8 655.1L959.6 658.2L962.8 660.9L959.6 664.0L962.2 665.3L961.6 669.7L963.4 675.3M960.8 655.1L966.4 657.3L966.6 660.4L976.8 661.8L976.0 665.1L972.0 665.7L972.0 668.3L974.0 670.5L976.4 667.5L977.6 675.1L976.4 680.4M996.6 647.2L991.8 651.7L987.8 654.9L985.6 660.9L986.0 663.1L980.6 665.9L980.4 670.5L977.6 675.1M996.6 647.2L1002.0 650.6L1002.0 658.0L997.4 664.2L997.6 666.6L1002.8 669.7L1005.2 671.0L1004.2 674.4L1007.6 677.2L1011.8 676.8L1014.2 678.5L1014.4 672.9L1015.8 673.1L1021.8 671.4L1026.4 671.2L1028.6 669.0L1034.0 671.2L1033.6 674.9L1039.2 676.8M1011.8 676.8L1007.6 681.9L1003.2 684.3L998.2 689.6L998.4 692.3L1002.0 699.0L1000.0 704.0L1003.8 709.6L1005.6 717.6L1002.2 723.5M1007.6 681.9L1009.4 685.3L1012.2 685.3L1011.4 692.3L1015.6 691.0L1019.2 690.2L1023.2 690.6L1026.2 694.4L1026.2 698.2L1029.6 701.5L1029.2 706.7L1019.2 707.5L1016.6 710.2L1018.8 718.2M1007.6 739.2L1011.6 742.3L1014.4 741.9L1015.6 740.1M1015.8 673.1L1019.2 679.2L1025.6 681.7L1023.2 684.7L1028.0 688.9L1033.4 696.3L1037.0 700.0L1037.2 704.4L1037.4 705.6L1037.4 715.3L1030.6 718.4L1032.0 721.6L1027.6 721.0L1025.0 723.3M1029.2 706.7L1031.2 708.7L1037.4 705.6M958.4 538.4L961.6 544.5L970.8 552.2L971.2 562.0L988.8 567.3L992.8 575.6L1014.4 577.0L1027.2 581.8L1044.4 577.2L1055.0 570.1L1052.8 566.5L1061.6 564.5L1070.8 559.4L1076.8 554.2L1086.6 553.3L1081.4 546.0L1078.4 545.7L1069.6 546.3L1074.0 534.4M956.6 539.0L958.4 538.4L966.0 535.0L976.4 528.5L984.4 530.0L996.4 535.0L1000.4 530.3L998.6 527.2L1002.8 520.1L1016.0 524.9L1016.4 529.7L1022.0 532.5L1028.8 530.7L1033.8 531.3L1041.6 537.5L1050.4 538.7L1058.8 536.0L1066.8 532.2L1074.0 534.4L1078.6 536.6L1084.0 531.3L1087.6 523.0L1090.0 517.2L1087.4 515.8L1092.0 512.2L1101.6 510.5L1109.6 513.9L1117.4 532.2L1117.6 534.7L1125.2 537.2L1129.8 540.5L1131.0 547.5L1137.4 547.5L1146.2 543.9L1144.0 549.2L1139.8 562.3L1134.6 561.4L1131.2 564.0L1132.4 571.8L1129.6 577.5L1126.0 577.2L1119.4 579.7L1114.8 580.7L1108.4 586.8L1104.6 590.5M1111.6 601.8L1114.0 600.8L1115.6 599.0L1120.6 597.5M1171.2 775.5L1171.2 801.7M1045.8 757.1L1049.2 761.5L1054.4 761.1L1057.2 759.1L1062.8 759.5L1066.4 756.3L1069.6 751.5L1070.4 747.9L1077.6 748.3M1107.2 799.8L1107.6 802.9M598.4 615.0L600.2 617.9L600.4 621.8L602.4 628.0L595.2 630.8L592.6 635.0L587.6 636.9L584.4 641.1L576.8 642.0L572.5 645.2L572.5 651.5L588.0 661.8L611.8 678.7L612.0 680.4L619.6 684.7L620.0 687.5L624.2 687.0L630.4 685.8L637.0 679.8L655.1 668.3M572.5 649.9L554.4 649.9M572.5 651.5L572.5 657.3L559.2 657.3L559.2 668.6L555.2 670.5L554.8 677.7L539.4 677.7M655.1 668.3L653.2 664.8L648.2 663.5L644.8 656.7L646.6 655.1L646.8 647.0L646.6 643.8L645.2 638.3L643.4 629.4L640.4 627.5L637.2 621.3L640.0 617.2L640.4 610.6L641.6 606.1M645.2 638.3L648.4 635.0L648.4 631.3L653.2 627.0L653.4 624.4M707.8 631.5L706.6 639.2L707.2 642.9L707.2 674.9L707.2 683.4L703.2 683.4L703.2 685.6L703.2 701.5L699.0 702.1L697.4 707.9L695.6 713.9L698.6 720.8L698.8 721.0M707.2 674.9L754.8 674.9M655.1 668.3L664.0 672.3L667.2 670.5L703.2 685.6M667.2 670.5L671.0 681.9L669.2 691.9L669.2 696.5L661.0 706.7L661.6 709.8L657.2 712.2L647.2 711.4L639.2 711.4L634.8 712.6L631.6 709.8L626.8 709.6L623.6 710.6L621.6 718.0L616.8 715.7L615.8 714.1L611.0 711.2L608.0 704.6L612.4 703.2L621.2 703.0L624.2 696.9L624.2 687.0M588.0 661.8L581.2 661.8L584.8 698.2L586.0 698.8L584.8 702.3L569.6 702.5L564.4 702.7L561.2 701.7L558.4 705.4L553.6 699.8L549.2 697.5L542.0 698.2L541.2 700.0M558.4 705.4L559.2 708.9L561.6 712.9L561.6 715.1L552.4 714.1L547.2 713.9L540.4 715.3M540.0 710.2L545.2 709.2L552.0 710.6L545.2 712.0L540.2 712.4M552.4 714.1L552.4 718.0L547.2 720.8M561.6 715.1L570.0 714.7L574.0 720.8L575.2 724.1L575.4 731.0L573.4 734.8L577.4 741.7L577.0 747.7M554.0 728.7L557.4 725.3L562.4 724.9L564.8 728.7L566.0 731.0L561.2 737.4M566.0 731.0L569.6 735.4L573.4 734.8M575.2 724.1L582.4 722.0L585.2 723.1L586.0 717.6L589.6 713.9L595.6 710.0L599.2 707.7L604.2 704.2L608.0 704.6M585.2 723.1L588.8 726.1L596.2 726.3L596.0 720.8L606.6 720.4L610.8 720.8L616.8 715.7M596.2 726.3L597.2 732.2L594.2 737.8L595.4 744.7M606.6 720.4L609.2 724.9L608.8 729.8L609.6 737.0L612.0 740.7M610.8 720.8L613.8 729.0L613.6 740.1M621.6 718.0L622.6 722.5L618.2 729.0L618.0 739.4M641.2 746.1L644.4 740.3L649.6 736.8L654.4 736.8L658.4 730.6L662.4 720.8L665.6 718.8L663.6 712.4L661.6 709.8M663.6 712.4L667.6 720.8L669.2 724.9L663.0 726.3L668.0 735.0L669.2 735.0L672.8 734.2L681.6 732.8L683.2 729.2L694.0 722.5L698.8 721.0L702.0 729.0L704.0 731.8L708.0 735.0L712.8 738.6L716.8 744.9M669.2 735.0L665.2 740.7L665.2 745.1L670.8 753.1L672.0 756.3L660.4 756.5L652.6 756.3L646.4 755.7M646.4 761.1L652.6 761.1L652.6 756.3M660.4 756.5L665.2 759.5L662.8 765.1L665.2 767.5L664.8 772.7L657.0 774.5L659.2 774.7L653.6 776.3L651.8 780.9M672.0 756.3L673.6 751.1L681.6 751.1L679.6 755.5L678.6 763.9L678.0 767.1L672.0 773.1L672.0 777.1L668.4 782.3L664.8 784.5L659.6 783.5L656.0 788.1M655.2 785.1L657.2 783.5L659.6 783.5M681.6 751.1L681.4 747.9L684.8 744.7L689.6 747.5L696.8 748.5L698.8 745.9L704.8 744.7L708.4 745.1L716.8 744.9L725.2 746.7L730.6 751.1L732.4 756.5L727.0 761.9L725.6 767.1L725.6 770.7L724.0 771.7L723.2 775.9L724.2 778.3L724.6 782.9M704.0 730.2L707.2 723.7L713.2 726.9L719.2 727.5L723.2 726.1L725.2 724.9L730.4 725.9L736.8 718.0L740.0 715.9L739.6 721.8L742.8 726.9L743.6 730.6L739.2 733.4L743.2 735.4L747.2 741.5L751.0 746.7M742.8 726.9L744.4 722.7L747.2 717.6L751.8 713.9L753.0 707.5L755.2 695.9L761.6 691.9M753.0 707.5L758.8 704.8L763.2 706.1L768.0 706.7L776.8 714.7L774.2 718.8L778.8 721.0L780.2 718.8M778.8 721.0L782.0 727.5L787.2 730.4L795.2 733.0L799.2 733.0L787.2 745.1L779.2 747.9L774.8 749.3L771.2 753.9L771.2 768.5L773.4 771.7M751.0 746.7L751.4 747.3L754.8 747.3L759.6 750.7L765.2 751.3L770.4 748.1L774.8 749.3M751.0 746.7L743.2 748.3L745.2 752.7L747.2 757.5L745.2 761.1L742.8 764.7L742.8 769.1L757.6 777.3L758.4 779.7L764.0 783.7M743.2 748.3L739.2 749.7L734.8 750.7L730.6 751.1M725.6 770.7L729.2 769.3L742.8 769.1M729.2 769.3L730.6 774.5L729.4 774.7L730.4 778.3L727.2 782.3L724.8 782.9M723.2 775.9L726.8 774.5L729.4 774.7M730.2 798.0L722.8 799.2L720.8 802.3L721.8 804.3L721.8 808.2L720.6 813.0L723.4 815.1L726.4 814.1L726.4 819.4L720.8 815.5L716.0 811.8L711.2 813.0L708.6 810.2L704.8 811.2L703.2 809.0L696.4 810.2L696.0 804.9L694.4 794.4L688.4 793.2L685.2 793.2L683.2 797.2L677.6 797.6L673.6 788.7L659.2 788.5L656.4 789.5M703.2 809.0L703.2 817.6L695.2 817.6L695.2 830.8L700.8 836.6M654.2 835.2L661.2 834.0L663.2 835.8L680.8 835.8L692.8 838.3L700.8 836.6L708.2 837.5M708.2 837.5L705.2 838.3L700.4 838.3L691.2 839.6L691.2 855.3L687.2 855.3L687.2 867.3L687.2 883.7L675.2 882.3L673.0 884.6M687.2 867.3L690.4 876.7L694.0 876.7L698.0 870.6L706.0 872.0L710.6 867.3L715.0 862.7L720.4 857.9L724.6 856.2L732.4 857.1M724.6 856.2L718.0 848.9L712.0 844.6L708.2 837.5L715.2 838.1L722.8 829.7L728.8 828.5M728.8 828.5L728.0 825.0L740.0 821.7L738.0 820.0L739.2 815.9L740.4 808.6L739.0 802.9L731.6 799.6L730.2 798.0M739.0 802.9L743.2 803.3M747.0 811.8L757.2 812.2L761.2 811.0L769.0 807.3M748.4 823.3L750.8 825.4L750.4 829.9L748.4 834.5L745.2 831.2L744.4 823.3L740.0 821.7M728.8 828.5L732.4 829.9L739.0 832.9L738.4 838.3L739.2 845.9L737.2 852.5L732.4 857.1L735.2 866.2L735.0 872.6L735.6 876.4L738.8 876.7M735.0 872.6L731.2 872.9L730.4 876.4L732.4 878.7L735.2 876.4" fill="none" stroke="#bdbdbd" stroke-width=".95" stroke-linejoin="round"/><g font-weight="700" fill="#2f2f2f" stroke="#fdfcfb" stroke-width="2.300" stroke-opacity=".92" paint-order="stroke" stroke-linejoin="round"><text x="189.8" y="676.3" font-size="9.28">MEXICO</text><text x="274.2" y="673.5" font-size="7.27">CUBA</text><text x="225.9" y="704.6" font-size="7.27">GUATEMALA</text><text x="244.7" y="717.0" font-size="7.25">NICARAGUA</text><text x="267.2" y="734.0" font-size="7.60">PANAMA</text><text x="322.1" y="736.1" font-size="7.03">VENEZUELA</text><text x="287.4" y="757.6" font-size="9.39">COLOMBIA</text><text x="272.7" y="773.4" font-size="7.18">ECUADOR</text><text x="296.2" y="796.0" font-size="8.42">PERU</text><text x="332.7" y="837.5" font-size="7.57">BOLIVIA</text><text x="357.6" y="748.8" font-size="7.43">GUYANA</text><text x="379.5" y="810.2" font-size="8.59">BRAZIL</text><text x="355.1" y="864.1" font-size="7.25">PARAGUAY</text><text x="627.0" y="462.3" font-size="7.80">NORWAY</text><text x="630.8" y="498.9" font-size="7.29">DENMARK</text><text x="627.0" y="530.2" font-size="8.90">GERMANY</text><text x="597.5" y="557.6" font-size="8.52">FRANCE</text><text x="595.5" y="579.6" font-size="7.24">ANDORRA</text><text x="551.0" y="593.9" font-size="8.87">PORTUGAL</text><text x="645.8" y="580.1" font-size="9.37">ITALY</text><text x="645.0" y="553.3" font-size="7.03">AUSTRIA</text><text x="692.5" y="475.9" font-size="7.34">ESTONIA</text><text x="694.2" y="490.1" font-size="7.14">LATVIA</text><text x="716.2" y="539.6" font-size="7.24">UKRAINE</text><text x="688.0" y="560.5" font-size="7.64">ROMANIA</text><text x="690.8" y="579.3" font-size="7.20">BULGARIA</text><text x="682.0" y="598.3" font-size="6.45">GREECE</text><text x="730.0" y="599.3" font-size="8.51">TURKEY</text><text x="630.0" y="624.0" font-size="7.69">TUNISIA</text><text x="558.8" y="636.6" font-size="7.27">MOROCCO</text><text x="603.8" y="651.2" font-size="6.94">ALGERIA</text><text x="669.5" y="656.9" font-size="7.31">LIBYA</text><text x="710.8" y="659.2" font-size="8.26">EGYPT</text><text x="735.0" y="637.9" font-size="6.61">ISRAEL</text><text x="775.0" y="627.6" font-size="7.20">IRAQ</text><text x="814.5" y="630.8" font-size="9.20">IRAN</text><text x="762.5" y="657.1" font-size="9.24">SAUDI</text><text x="759.6" y="668.2" font-size="8.95">ARABIA</text><text x="843.8" y="552.9" font-size="7.14">KAZAKHSTAN</text><text x="1001.0" y="556.0" font-size="7.89">MONGOLIA</text><text x="882.3" y="585.2" font-size="6.98">KYRGYZSTAN</text><text x="869.8" y="600.4" font-size="7.26">TAJIKISTAN</text><text x="845.5" y="624.6" font-size="7.48">AFGHANISTAN</text><text x="869.2" y="641.5" font-size="9.23">PAKISTAN</text><text x="931.5" y="650.7" font-size="7.24">NEPAL</text><text x="1011.9" y="619.4" font-size="9.73">CHINA</text><text x="1148.7" y="611.2" font-size="8.90">JAPAN</text><text x="908.3" y="677.6" font-size="10.18">INDIA</text><text x="943.3" y="667.3" font-size="7.11">BANGLADESH</text><text x="910.8" y="737.7" font-size="7.26">SRI LANKA</text><text x="1075.8" y="669.5" font-size="7.96">TAIWAN</text><text x="1011.4" y="685.9" font-size="6.91">LAOS</text><text x="971.6" y="698.5" font-size="7.76">MYANMAR</text><text x="1019.6" y="715.3" font-size="9.58">VIETNAM</text><text x="1069.0" y="717.2" font-size="9.48">PHILIPPINES</text><text x="997.1" y="749.2" font-size="7.48">MALAYSIA</text><text x="1039.6" y="758.5" font-size="7.48">MALAYSIA</text><text x="1088.2" y="802.0" font-size="7.35">EAST TIMOR</text><text x="1120.6" y="871.0" font-size="9.02">AUSTRALIA</text><text x="546.5" y="685.5" font-size="7.78">MAURITANIA</text><text x="589.4" y="701.7" font-size="7.53">MALI</text><text x="633.5" y="695.9" font-size="7.39">NIGER</text><text x="533.5" y="709.4" font-size="6.87">SENEGAL</text><text x="550.3" y="724.7" font-size="7.46">GUINEA</text><text x="620.4" y="730.3" font-size="9.17">NIGERIA</text><text x="589.4" y="736.0" font-size="7.55">GHANA</text><text x="556.1" y="745.0" font-size="7.17">LIBERIA</text><text x="673.2" y="704.7" font-size="7.27">CHAD</text><text x="712.3" y="709.3" font-size="7.42">SUDAN</text><text x="744.5" y="703.3" font-size="6.90">ERITREA</text><text x="786.6" y="701.9" font-size="7.14">YEMEN</text><text x="740.3" y="727.9" font-size="9.32">ETHIOPIA</text><text x="786.9" y="734.7" font-size="7.48">SOMALIA</text><text x="746.3" y="762.9" font-size="8.95">KENYA</text><text x="662.2" y="815.8" font-size="7.39">ANGOLA</text><text x="703.0" y="826.9" font-size="7.64">ZAMBIA</text><text x="767.2" y="845.0" font-size="7.21">MADAGASCAR</text><text x="684.8" y="863.4" font-size="7.35">BOTSWANA</text><text x="691.6" y="882.2" font-size="9.00">SOUTH</text><text x="206.4" y="583.7" font-size="8.60" text-anchor="middle">UNITED</text><text x="206.4" y="595.1" font-size="8.60" text-anchor="middle">STATES OF</text><text x="206.4" y="606.5" font-size="8.60" text-anchor="middle">AMERICA</text><text x="326.4" y="685.9" font-size="7.98" text-anchor="middle">DOMINICAN</text><text x="326.4" y="695.0" font-size="7.98" text-anchor="middle">REPUBLIC</text><text x="594.5" y="501.0" font-size="9.67" text-anchor="middle">UNITED</text><text x="594.5" y="512.2" font-size="9.67" text-anchor="middle">KINGDOM</text><text x="718.8" y="509.5" font-size="6.92" text-anchor="middle">REPUBLIC</text><text x="718.8" y="518.7" font-size="6.92" text-anchor="middle">OF BELARUS</text><text x="823.9" y="665.1" font-size="7.36" text-anchor="middle">UNITED ARAB</text><text x="823.9" y="673.9" font-size="7.36" text-anchor="middle">EMIRATES</text><text x="1118.9" y="605.5" font-size="8.72" text-anchor="middle">SOUTH</text><text x="1118.9" y="617.0" font-size="8.72" text-anchor="middle">KOREA</text><text x="1184.2" y="785.7" font-size="9.23" text-anchor="middle">PAPUA NEW</text><text x="1184.2" y="797.0" font-size="9.23" text-anchor="middle">GUINEA</text><text x="601.2" y="714.8" font-size="7.48" text-anchor="middle">BURKINA</text><text x="601.2" y="723.9" font-size="7.48" text-anchor="middle">FASO</text><text x="687.4" y="730.6" font-size="7.10" text-anchor="middle">CENTRAL</text><text x="687.4" y="739.9" font-size="7.10" text-anchor="middle">AFRICAN</text><text x="687.4" y="749.2" font-size="7.10" text-anchor="middle">REPUBLIC</text><text x="726.1" y="731.7" font-size="7.42" text-anchor="middle">SOUTH</text><text x="726.1" y="741.3" font-size="7.42" text-anchor="middle">SUDAN</text><text x="703.0" y="769.2" font-size="8.93" text-anchor="middle">DEMOCRATIC</text><text x="703.0" y="780.6" font-size="8.93" text-anchor="middle">REPUBLIC OF</text><text x="703.0" y="792.2" font-size="8.93" text-anchor="middle">THE CONGO</text><text x="1238.600" y="802.400" font-size="7.400">SOLOMON</text><text x="1238.600" y="811.500" font-size="7.400">ISLANDS</text><text x="1259.700" y="835.300" font-size="7.400">VANUATU</text></g><g fill="#6a6a6a" stroke="#fdfcfb" stroke-width="2" stroke-opacity=".9" paint-order="stroke" stroke-linejoin="round"><text x="305.4" y="599.7" font-size="9.80">Washington</text><text x="109.0" y="624.2" font-size="9.67">Los Angeles</text><text x="622.0" y="544.4" font-size="9.22">Paris</text><text x="762.5" y="493.4" font-size="9.88">Moscow</text><text x="763.8" y="504.8" font-size="9.74">Москва</text><text x="880.6" y="691.7" font-size="10.26">Mumbai</text><text x="1072.6" y="631.9" font-size="9.70">Shanghai</text><text x="1038.8" y="793.5" font-size="9.21">Jakarta</text><text x="405.0" y="863.2" font-size="9.34">Rio de Janeiro</text></g><g fill="none" stroke="#7a7a7a" stroke-width=".8"><path d="M1079 636.500V644.500M1075 644.500H1084M1079 640H1083"/><path d="M1086.500 637L1087.500 638.500M1086 640L1087 641.500M1086 644.500L1087.500 642.500M1089.500 636L1089 638H1095M1089 638V644H1094.500M1088.500 641H1095.500M1092 638.500L1091.500 644"/><path d="M1101.500 635.500V637M1097.500 637.500H1106M1098.500 639.500V644M1098.500 639.500H1105V643.500M1101.800 637.500V645"/></g><path d="M299.70 592.40L300.59 594.78L303.12 594.89L301.14 596.47L301.82 598.91L299.70 597.51L297.58 598.91L298.26 596.47L296.28 594.89L298.81 594.78Z" fill="#3a3a3a"/><path d="M616.75 537.65L617.64 540.03L620.17 540.14L618.19 541.72L618.87 544.16L616.75 542.76L614.63 544.16L615.31 541.72L613.33 540.14L615.86 540.03Z" fill="#3a3a3a"/><path d="M758.00 491.90L758.89 494.28L761.42 494.39L759.44 495.97L760.12 498.41L758.00 497.01L755.88 498.41L756.56 495.97L754.58 494.39L757.11 494.28Z" fill="#3a3a3a"/><path d="M1034.70 786.50L1035.59 788.88L1038.12 788.99L1036.14 790.57L1036.82 793.01L1034.70 791.61L1032.58 793.01L1033.26 790.57L1031.28 788.99L1033.81 788.88Z" fill="#3a3a3a"/><g font-style="italic" fill="#b7c2cf" stroke="#f7f9fb" stroke-width="1.200" stroke-opacity=".95" paint-order="stroke" stroke-linejoin="round" text-anchor="middle"><text x="264.6" y="469.9" font-size="8.56" letter-spacing="1.1">Hudson</text><text x="264.6" y="479.3" font-size="8.56" letter-spacing="1.1">Bay</text><text x="388.6" y="485.1" font-size="9.19" letter-spacing="1.1">Labrador</text><text x="388.6" y="495.1" font-size="9.19" letter-spacing="1.1">Sea</text><text x="368.6" y="638.4" font-size="8.53" letter-spacing="1.1">Sargasso</text><text x="368.6" y="647.9" font-size="8.53" letter-spacing="1.1">Sea</text><text x="448.1" y="588.9" font-size="9.24" letter-spacing="1.1">Nordo</text><text x="448.1" y="598.9" font-size="9.24" letter-spacing="1.1">Atlantiko</text><text x="248.6" y="660.9" font-size="9.17" letter-spacing="1.1">Gulf of</text><text x="248.6" y="670.7" font-size="9.17" letter-spacing="1.1">Mexico</text><text x="125.5" y="766.7" font-size="11.34" letter-spacing="1.1">Pacific</text><text x="125.5" y="778.5" font-size="11.34" letter-spacing="1.1">Ocean</text><text x="455.7" y="709.3" font-size="11.68" letter-spacing="1.1">Atlantic</text><text x="455.7" y="720.7" font-size="11.68" letter-spacing="1.1">Ocean</text><text x="888.6" y="804.0" font-size="11.86" letter-spacing="1.1">Indian</text><text x="888.6" y="815.9" font-size="11.86" letter-spacing="1.1">Ocean</text><text x="1148.0" y="682.4" font-size="9.29" letter-spacing="1.1">Philippine</text><text x="1148.0" y="692.0" font-size="9.29" letter-spacing="1.1">Sea</text><text x="987.8" y="723.4" font-size="8.90" letter-spacing="1.1">Andaman</text><text x="987.8" y="732.5" font-size="8.90" letter-spacing="1.1">Sea</text><text x="1208.3" y="499.4" font-size="8.75" letter-spacing="1.1">Sea of</text><text x="1208.3" y="508.6" font-size="8.75" letter-spacing="1.1">Okhotsk</text></g><circle cx="287.5" cy="588" r="2.300" fill="#fad971" fill-opacity=".85" stroke="#d8a320" stroke-width="1"/><circle cx="217" cy="602" r="2.300" fill="#fad971" fill-opacity=".85" stroke="#d8a320" stroke-width="1"/><circle cx="133.75" cy="620.75" r="2.300" fill="#fad971" fill-opacity=".85" stroke="#d8a320" stroke-width="1"/><circle cx="160" cy="621.75" r="2.300" fill="#fad971" fill-opacity=".85" stroke="#d8a320" stroke-width="1"/><circle cx="214.25" cy="641.5" r="2.300" fill="#fad971" fill-opacity=".85" stroke="#d8a320" stroke-width="1"/><circle cx="703.75" cy="493.75" r="2.300" fill="#fad971" fill-opacity=".85" stroke="#d8a320" stroke-width="1"/><circle cx="691.25" cy="519.25" r="2.300" fill="#fad971" fill-opacity=".85" stroke="#d8a320" stroke-width="1"/><circle cx="689.5" cy="536" r="2.300" fill="#fad971" fill-opacity=".85" stroke="#d8a320" stroke-width="1"/><circle cx="700.75" cy="576.25" r="2.300" fill="#fad971" fill-opacity=".85" stroke="#d8a320" stroke-width="1"/><circle cx="750.75" cy="620.75" r="2.300" fill="#fad971" fill-opacity=".85" stroke="#d8a320" stroke-width="1"/><circle cx="1063.5" cy="673.8" r="2.300" fill="#fad971" fill-opacity=".85" stroke="#d8a320" stroke-width="1"/><circle cx="627" cy="518.250" r="7.800" fill="#f5a352" fill-opacity=".85" stroke="#c9853f" stroke-width="1"/><circle cx="312" cy="587.300" r="11.600" fill="#f5583f" fill-opacity=".85" stroke="#c63a2c" stroke-width="1"/><circle cx="1022.900" cy="760.200" r="13.300" fill="#93203c" fill-opacity=".88" stroke="#5e1226" stroke-width="1"/><rect x="43" y="445" width=".700" height="437" fill="#fff"/></svg><div class="abs" style="left:51px;top:453px;width:18px;height:36.500px;background:#fff;border-radius:3px;box-shadow:0 1px 3px rgba(60,70,90,.3),0 0 1px rgba(60,70,90,.2)"></div><div class="abs" style="left:51px;top:471px;width:18px;height:1px;background:#e6e9ee"></div><svg class="abs" style="left:51px;top:453px" width="18" height="37" viewBox="0 0 18 37" stroke="#222" stroke-width="1.400" fill="none"><path d="M5.800 9.200H12.200M9 6V12.400M6.500 27.300H11.500"/></svg><div class="abs" style="left:51px;top:496px;width:18px;height:18px;background:#fff;border-radius:3px;box-shadow:0 1px 3px rgba(60,70,90,.3),0 0 1px rgba(60,70,90,.2)"></div><svg class="abs" style="left:51px;top:496px" width="18" height="18" viewBox="0 0 18 18" stroke="#222" stroke-width="1.100" fill="none"><path d="M6.800 4.500V11.200H13.500M4.500 6.800H11.200V13.500"/></svg><div class="abs" style="left:51px;top:520.500px;width:18px;height:36.500px;background:#fff;border-radius:3px;box-shadow:0 1px 3px rgba(60,70,90,.3),0 0 1px rgba(60,70,90,.2)"></div><div class="abs" style="left:51px;top:538.500px;width:18px;height:1px;background:#e6e9ee"></div><svg class="abs" style="left:51px;top:520.500px" width="18" height="37" viewBox="0 0 18 37" fill="#222"><path d="M9 5.800L12.600 8.500 11.200 12.600H6.800L5.400 8.500Z"/><rect x="6.200" y="24.800" width="5.600" height="5.600"/></svg><div class="abs" style="left:1197px;top:796px;width:65px;height:67px;background:rgba(255,255,255,.72);border-radius:3px;box-shadow:0 1px 3px rgba(60,70,90,.25)"></div><div class="t" style="left:1202.800px;top:799.600px;font-size:8.300px;font-weight:700;color:#3c4350">Count</div><div class="abs" style="left:1202.700px;top:811.1999999999999px;width:7.200px;height:7.200px;border-radius:50%;background:#fad971;border:1px solid #e0b64a"></div><div class="t" style="left:1213px;top:810.8px;font-size:7.800px;color:#454b57">1 – 13.25</div><div class="abs" style="left:1202.700px;top:823.8px;width:7.200px;height:7.200px;border-radius:50%;background:#f8a04e;border:1px solid #d98a3a"></div><div class="t" style="left:1213px;top:823.4px;font-size:7.800px;color:#454b57">13.25 – 25.5</div><div class="abs" style="left:1202.700px;top:835.9px;width:7.200px;height:7.200px;border-radius:50%;background:#f4503a;border:1px solid #cf3b2a"></div><div class="t" style="left:1213px;top:835.5px;font-size:7.800px;color:#454b57">25.5 – 37.75</div><div class="abs" style="left:1202.700px;top:848.3px;width:7.200px;height:7.200px;border-radius:50%;background:#8a1a38;border:1px solid #5e1226"></div><div class="t" style="left:1213px;top:847.9px;font-size:7.800px;color:#454b57">37.75 – 50</div><div class="abs" style="left:995px;top:870.500px;width:274px;height:11.500px;background:rgba(255,255,255,.6)"></div><div class="t" style="left:997.600px;top:872.600px;font-size:7.750px;color:#3a3f4a">© OpenStreetMap contributors, OpenMapTiles, MapTiler, Elastic Maps Service</div></body></html>
